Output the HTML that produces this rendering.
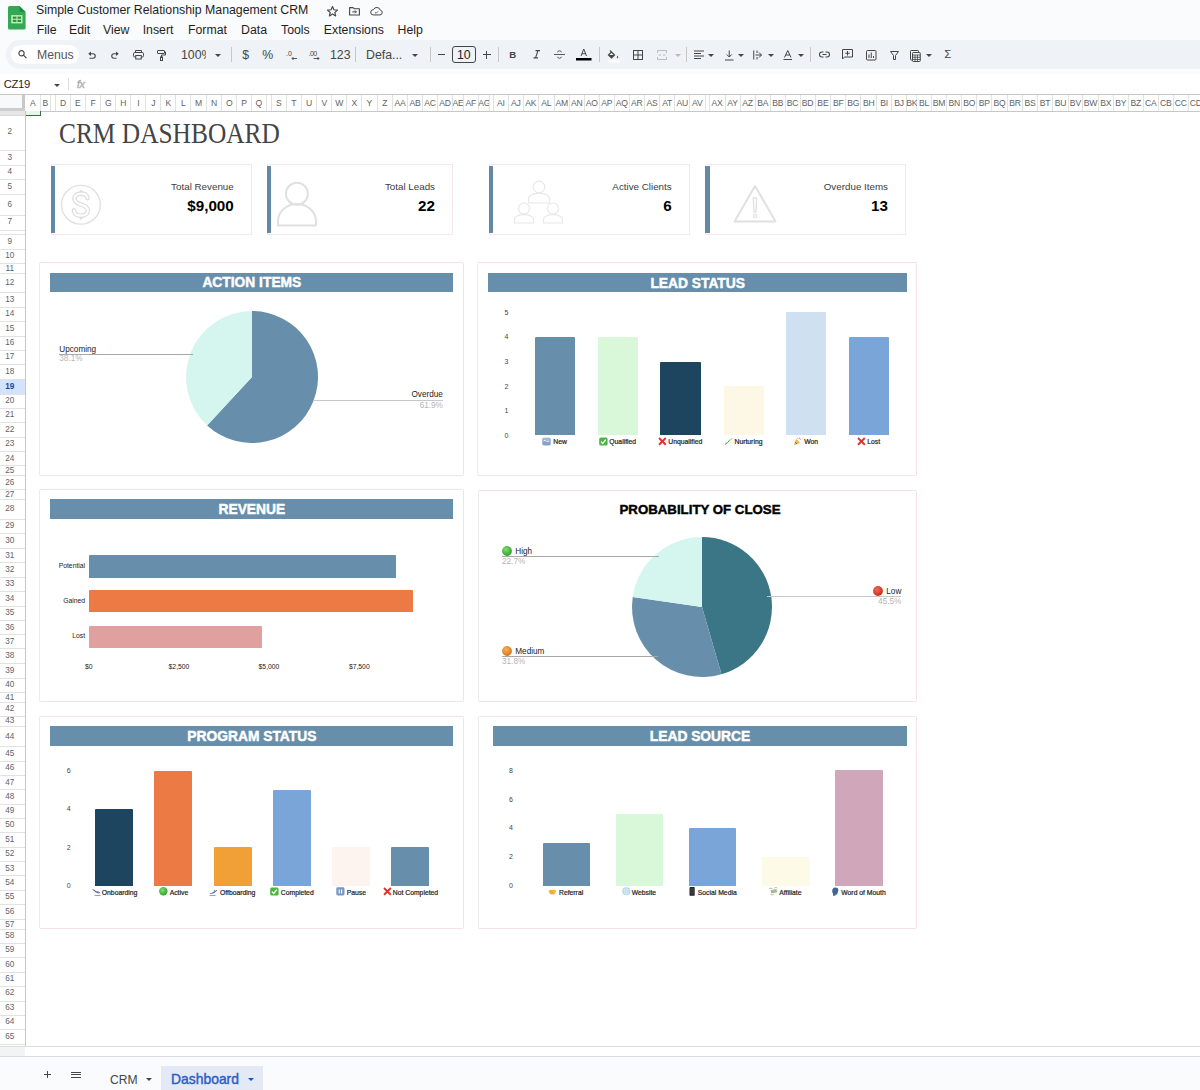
<!DOCTYPE html><html><head><meta charset="utf-8"><style>
html,body{margin:0;padding:0;}
body{width:1200px;height:1090px;overflow:hidden;position:relative;background:#f9fbfd;font-family:"Liberation Sans",sans-serif;}
div{box-sizing:border-box;}
svg{position:absolute;overflow:visible;}
</style></head><body>
<svg style="left:8.4px;top:5.9px" width="17.6" height="23.6" viewBox="0 0 17.6 23.6">
<path d="M1.5 0 H11.4 L17.6 6 V22 Q17.6 23.6 16 23.6 H1.5 Q0 23.6 0 22 V1.5 Q0 0 1.5 0Z" fill="#34a853"/>
<path d="M11.4 0 L17.6 6 H13 Q11.4 6 11.4 4.5Z" fill="#1e8e3e"/>
<rect x="3.2" y="9.1" width="11.3" height="8.3" fill="#b9f2b5"/>
<rect x="4.8" y="10.6" width="3.6" height="2.1" fill="#2e8b3e"/>
<rect x="9.5" y="10.6" width="3.6" height="2.1" fill="#2e8b3e"/>
<rect x="4.8" y="13.8" width="3.6" height="2.1" fill="#2e8b3e"/>
<rect x="9.5" y="13.8" width="3.6" height="2.1" fill="#2e8b3e"/>
</svg>
<div style="position:absolute;top:4.07px;font-size:12.32px;line-height:12.32px;color:#1f1f1f;font-weight:normal;white-space:nowrap;font-family:'Liberation Sans', sans-serif;left:36.00px;">Simple Customer Relationship Management CRM</div>
<svg style="left:327.3px;top:6.3px" width="11" height="10.5" viewBox="1 1.5 22 21"><path d="M12 2.5l2.9 6.6 7.1.6-5.4 4.7 1.6 7-6.2-3.7-6.2 3.7 1.6-7L2 9.7l7.1-.6z" fill="none" stroke="#444746" stroke-width="2.3" stroke-linejoin="round"/></svg>
<svg style="left:349px;top:7.3px" width="11" height="8.6" viewBox="0 0 22 17"><path d="M1.2 1.2h7l2 2.2h10.6v12.4H1.2z" fill="none" stroke="#444746" stroke-width="2.2" stroke-linejoin="round"/><path d="M6.5 9.6h8M12 6.8l2.8 2.8-2.8 2.8" fill="none" stroke="#444746" stroke-width="2"/></svg>
<svg style="left:370px;top:7.3px" width="13" height="8.6" viewBox="0 0 26 17"><path d="M6.5 15.8h13.5a4.8 4.8 0 0 0 .6-9.5A7.2 7.2 0 0 0 7 5.2a5.3 5.3 0 0 0-.5 10.6z" fill="none" stroke="#444746" stroke-width="2"/><path d="M10 10.5l2.2 2 4-4" fill="none" stroke="#444746" stroke-width="1.8"/></svg>
<div style="position:absolute;top:23.89px;font-size:12.3px;line-height:12.3px;color:#1f1f1f;font-weight:normal;white-space:nowrap;font-family:'Liberation Sans', sans-serif;left:36.70px;">File</div>
<div style="position:absolute;top:23.89px;font-size:12.3px;line-height:12.3px;color:#1f1f1f;font-weight:normal;white-space:nowrap;font-family:'Liberation Sans', sans-serif;left:69.00px;">Edit</div>
<div style="position:absolute;top:23.89px;font-size:12.3px;line-height:12.3px;color:#1f1f1f;font-weight:normal;white-space:nowrap;font-family:'Liberation Sans', sans-serif;left:103.00px;">View</div>
<div style="position:absolute;top:23.89px;font-size:12.3px;line-height:12.3px;color:#1f1f1f;font-weight:normal;white-space:nowrap;font-family:'Liberation Sans', sans-serif;left:142.70px;">Insert</div>
<div style="position:absolute;top:23.89px;font-size:12.3px;line-height:12.3px;color:#1f1f1f;font-weight:normal;white-space:nowrap;font-family:'Liberation Sans', sans-serif;left:188.00px;">Format</div>
<div style="position:absolute;top:23.89px;font-size:12.3px;line-height:12.3px;color:#1f1f1f;font-weight:normal;white-space:nowrap;font-family:'Liberation Sans', sans-serif;left:241.00px;">Data</div>
<div style="position:absolute;top:23.89px;font-size:12.3px;line-height:12.3px;color:#1f1f1f;font-weight:normal;white-space:nowrap;font-family:'Liberation Sans', sans-serif;left:281.00px;">Tools</div>
<div style="position:absolute;top:23.89px;font-size:12.3px;line-height:12.3px;color:#1f1f1f;font-weight:normal;white-space:nowrap;font-family:'Liberation Sans', sans-serif;left:323.80px;">Extensions</div>
<div style="position:absolute;top:23.89px;font-size:12.3px;line-height:12.3px;color:#1f1f1f;font-weight:normal;white-space:nowrap;font-family:'Liberation Sans', sans-serif;left:397.50px;">Help</div>
<div style="position:absolute;left:6.00px;top:40.20px;width:1194.00px;height:28.80px;background:#eff2f6;border-radius:14px 0 0 14px;"></div>
<div style="position:absolute;left:10.80px;top:45.20px;width:68.20px;height:18.80px;background:#ffffff;border-radius:10px;"></div>
<svg style="left:18.3px;top:50.2px" width="9.7" height="8.5" viewBox="0 0 20 18"><circle cx="7.2" cy="6.8" r="5.6" fill="none" stroke="#444746" stroke-width="2.4"/><path d="M11.2 10.8l6.5 6.5" stroke="#444746" stroke-width="2.6"/></svg>
<div style="position:absolute;top:48.84px;font-size:12.24px;line-height:12.24px;color:#555;font-weight:normal;white-space:nowrap;font-family:'Liberation Sans', sans-serif;left:37.00px;">Menus</div>
<svg style="left:88.3px;top:51px" width="8" height="8" viewBox="0 0 16 16"><path d="M0.5 5.5L6 1v9z" fill="#444746"/><path d="M5 5.5h5a4.5 4.5 0 0 1 0 9H3" fill="none" stroke="#444746" stroke-width="2.2"/></svg>
<svg style="left:111px;top:51px" width="8" height="8" viewBox="0 0 16 16"><path d="M15.5 5.5L10 1v9z" fill="#444746"/><path d="M11 5.5H6a4.5 4.5 0 0 0 0 9h5" fill="none" stroke="#444746" stroke-width="2.2"/></svg>
<svg style="left:133px;top:50px" width="11" height="9.5" viewBox="0 0 22 19"><path d="M5 5V1h12v4" fill="none" stroke="#444746" stroke-width="2"/><rect x="1" y="5" width="20" height="9" rx="2.5" fill="none" stroke="#444746" stroke-width="2"/><rect x="5.5" y="11" width="11" height="7" fill="#edf2fa" stroke="#444746" stroke-width="2"/></svg>
<svg style="left:157px;top:49.5px" width="9" height="11" viewBox="0 0 18 22"><rect x="1" y="1" width="14" height="6" rx="1" fill="none" stroke="#444746" stroke-width="2"/><path d="M15 4h2v6H9v4" fill="none" stroke="#444746" stroke-width="2"/><rect x="7" y="14" width="4" height="7" fill="none" stroke="#444746" stroke-width="2"/></svg>
<div style="position:absolute;left:181px;top:44px;width:25px;height:20px;overflow:hidden;">
<div style="position:absolute;top:4.99px;font-size:12.3px;line-height:12.3px;color:#444746;font-weight:normal;white-space:nowrap;font-family:'Liberation Sans', sans-serif;left:0.00px;">100%</div>
</div>
<div style="position:absolute;left:214.5px;top:53.7px;width:0;height:0;border-left:3px solid transparent;border-right:3px solid transparent;border-top:3px solid #444746;"></div>
<div style="position:absolute;left:230.50px;top:47.00px;width:1.00px;height:15.00px;background:#c7c7c7;"></div>
<div style="position:absolute;top:48.99px;font-size:12.3px;line-height:12.3px;color:#444746;font-weight:normal;white-space:nowrap;font-family:'Liberation Sans', sans-serif;left:242.30px;">$</div>
<div style="position:absolute;top:48.99px;font-size:12.3px;line-height:12.3px;color:#444746;font-weight:normal;white-space:nowrap;font-family:'Liberation Sans', sans-serif;left:262.30px;">%</div>
<svg style="left:286px;top:49px" width="12" height="12" viewBox="0 0 24 24"><text x="0" y="14" font-family="Liberation Sans" font-size="14" fill="#444746">.0</text><path d="M22 19H12M15 16l-3 3 3 3" fill="none" stroke="#444746" stroke-width="1.8"/></svg>
<svg style="left:309px;top:49px" width="12" height="12" viewBox="0 0 24 24"><text x="-1" y="14" font-family="Liberation Sans" font-size="14" fill="#444746" letter-spacing="-1">.00</text><path d="M9 19h11M17 16l3 3-3 3" fill="none" stroke="#444746" stroke-width="1.8"/></svg>
<div style="position:absolute;top:48.99px;font-size:12.3px;line-height:12.3px;color:#444746;font-weight:normal;white-space:nowrap;font-family:'Liberation Sans', sans-serif;left:330.00px;">123</div>
<div style="position:absolute;left:354.50px;top:47.00px;width:1.00px;height:15.00px;background:#c7c7c7;"></div>
<div style="position:absolute;top:48.99px;font-size:12.3px;line-height:12.3px;color:#444746;font-weight:normal;white-space:nowrap;font-family:'Liberation Sans', sans-serif;left:366.00px;">Defa...</div>
<div style="position:absolute;left:412.0px;top:53.7px;width:0;height:0;border-left:3px solid transparent;border-right:3px solid transparent;border-top:3px solid #444746;"></div>
<div style="position:absolute;left:429.50px;top:47.00px;width:1.00px;height:15.00px;background:#c7c7c7;"></div>
<div style="position:absolute;left:437.50px;top:54.00px;width:7.00px;height:1.20px;background:#444746;"></div>
<div style="position:absolute;left:452px;top:45.5px;width:23.5px;height:17px;border:1.3px solid #444746;border-radius:3px;"></div>
<div style="position:absolute;top:48.89px;font-size:12.3px;line-height:12.3px;color:#1f1f1f;font-weight:normal;white-space:nowrap;font-family:'Liberation Sans', sans-serif;left:163.75px;width:600px;text-align:center;">10</div>
<div style="position:absolute;left:482.50px;top:54.00px;width:8.00px;height:1.20px;background:#444746;"></div>
<div style="position:absolute;left:485.90px;top:50.60px;width:1.20px;height:8.00px;background:#444746;"></div>
<div style="position:absolute;left:497.50px;top:47.00px;width:1.00px;height:15.00px;background:#c7c7c7;"></div>
<div style="position:absolute;top:49.77px;font-size:9.6px;line-height:9.6px;color:#444746;font-weight:bold;white-space:nowrap;font-family:'Liberation Sans', sans-serif;left:509.20px;">B</div>
<svg style="left:532.5px;top:50px" width="7.5" height="8.5" viewBox="0 0 15 17"><path d="M5 1.2h9M1 15.8h9M10 1.2L5 15.8" fill="none" stroke="#444746" stroke-width="2.2"/></svg>
<svg style="left:554px;top:50px" width="11" height="9" viewBox="0 0 22 18"><path d="M0 9h22" stroke="#444746" stroke-width="1.8"/><path d="M15 4.5Q14 1.5 11 1.5T7 4.5M7 13.5q1 3 4 3t4-3" fill="none" stroke="#444746" stroke-width="1.8"/></svg>
<svg style="left:575.5px;top:48.2px" width="15.5" height="13" viewBox="0 0 31 26"><path d="M10 16L15.5 2l5.5 14M12 11.5h7" fill="none" stroke="#444746" stroke-width="2"/><rect x="0" y="20" width="31" height="5" fill="#000"/></svg>
<div style="position:absolute;left:598.50px;top:47.00px;width:1.00px;height:15.00px;background:#c7c7c7;"></div>
<svg style="left:608px;top:48.5px" width="12" height="14" viewBox="0 0 24 28"><path d="M4 3l9 9-6 6-6-6 6-6" fill="none" stroke="#444746" stroke-width="2.4"/><path d="M1 12h12l-6 6z" fill="#444746"/><path d="M19 13q3 4 0 6q-3-2 0-6z" fill="#444746"/><rect x="0" y="23" width="24" height="4" fill="#ffffff"/></svg>
<svg style="left:633px;top:50px" width="10" height="10" viewBox="0 0 20 20"><rect x="1" y="1" width="18" height="18" fill="none" stroke="#444746" stroke-width="2"/><path d="M10 1v18M1 10h18" stroke="#444746" stroke-width="2"/></svg>
<svg style="left:657px;top:50px" width="10" height="10" viewBox="0 0 20 20"><path d="M1 6V1h18v5M1 14v5h18v-5" fill="none" stroke="#b8bcc2" stroke-width="2"/><path d="M3 10h5M12 10h5" stroke="#b8bcc2" stroke-width="2"/></svg>
<div style="position:absolute;left:674.5px;top:53.7px;width:0;height:0;border-left:3px solid transparent;border-right:3px solid transparent;border-top:3px solid #b8bcc2;"></div>
<div style="position:absolute;left:685.50px;top:47.00px;width:1.00px;height:15.00px;background:#c7c7c7;"></div>
<svg style="left:694px;top:50px" width="10" height="10" viewBox="0 0 20 20"><path d="M0 2h20M0 7h14M0 12h20M0 17h14" stroke="#444746" stroke-width="2"/></svg>
<div style="position:absolute;left:708.0px;top:53.7px;width:0;height:0;border-left:3px solid transparent;border-right:3px solid transparent;border-top:3px solid #444746;"></div>
<svg style="left:724.5px;top:49.5px" width="8.5" height="11" viewBox="0 0 17 22"><path d="M8.5 1v13M3.5 9l5 5 5-5M0 20h17" fill="none" stroke="#444746" stroke-width="2"/></svg>
<div style="position:absolute;left:738.0px;top:53.7px;width:0;height:0;border-left:3px solid transparent;border-right:3px solid transparent;border-top:3px solid #444746;"></div>
<svg style="left:753px;top:50px" width="9.5" height="10" viewBox="0 0 19 20"><path d="M1.5 1v18M5 10h12M12 5l5 5-5 5" fill="none" stroke="#444746" stroke-width="2"/><path d="M8 1v5M8 14v5" stroke="#444746" stroke-width="2"/></svg>
<div style="position:absolute;left:767.5px;top:53.7px;width:0;height:0;border-left:3px solid transparent;border-right:3px solid transparent;border-top:3px solid #444746;"></div>
<svg style="left:783px;top:49.5px" width="9.5" height="11" viewBox="0 0 19 22"><path d="M3 15L9.5 1 16 15M5.5 10h8" fill="none" stroke="#444746" stroke-width="2"/><path d="M1 19h17" stroke="#444746" stroke-width="2"/></svg>
<div style="position:absolute;left:797.5px;top:53.7px;width:0;height:0;border-left:3px solid transparent;border-right:3px solid transparent;border-top:3px solid #444746;"></div>
<div style="position:absolute;left:809.50px;top:47.00px;width:1.00px;height:15.00px;background:#c7c7c7;"></div>
<svg style="left:819px;top:51px" width="11" height="7" viewBox="0 0 22 14"><path d="M9 2H6a5 5 0 0 0 0 10h3M13 2h3a5 5 0 0 1 0 10h-3M7 7h8" fill="none" stroke="#444746" stroke-width="2.2"/></svg>
<svg style="left:842px;top:49px" width="11" height="11" viewBox="0 0 22 22"><path d="M1 1h20v15H5l-4 4z" fill="none" stroke="#444746" stroke-width="2"/><path d="M11 4v9M6.5 8.5h9" stroke="#444746" stroke-width="2"/></svg>
<svg style="left:865.5px;top:50px" width="10.5" height="10.5" viewBox="0 0 21 21"><rect x="1" y="1" width="19" height="19" rx="2" fill="none" stroke="#444746" stroke-width="2"/><path d="M6 16V9M10.5 16V5M15 16v-4" stroke="#444746" stroke-width="2"/></svg>
<svg style="left:890px;top:50.5px" width="9" height="9" viewBox="0 0 18 18"><path d="M1 1h16l-6 8v8H7V9z" fill="none" stroke="#444746" stroke-width="2"/></svg>
<svg style="left:910px;top:49.5px" width="12.5" height="12" viewBox="0 0 25 24"><path d="M4 20H2.5A1.5 1.5 0 0 1 1 18.5V2.5A1.5 1.5 0 0 1 2.5 1h13A1.5 1.5 0 0 1 17 2.5V4" fill="none" stroke="#444746" stroke-width="2"/><rect x="5" y="5" width="15.5" height="18" rx="1.5" fill="none" stroke="#444746" stroke-width="2"/><path d="M5 10h15.5M5 14.5h15.5M5 19h15.5M10 10v13M15 10v13" stroke="#444746" stroke-width="1.6"/></svg>
<div style="position:absolute;left:926.0px;top:53.7px;width:0;height:0;border-left:3px solid transparent;border-right:3px solid transparent;border-top:3px solid #444746;"></div>
<div style="position:absolute;top:49.07px;font-size:11.5px;line-height:11.5px;color:#444746;font-weight:normal;white-space:nowrap;font-family:'Liberation Sans', sans-serif;left:944.30px;">&Sigma;</div>
<div style="position:absolute;left:0.00px;top:73.80px;width:1200.00px;height:20.20px;background:#ffffff;"></div>
<div style="position:absolute;top:78.53px;font-size:11.3px;line-height:11.3px;color:#1f1f1f;font-weight:normal;white-space:nowrap;font-family:'Liberation Sans', sans-serif;letter-spacing:-0.35px;left:3.75px;">CZ19</div>
<div style="position:absolute;left:53.5px;top:83.9px;width:0;height:0;border-left:3px solid transparent;border-right:3px solid transparent;border-top:3px solid #444746;"></div>
<div style="position:absolute;left:67.80px;top:78.20px;width:1.00px;height:11.60px;background:#dadce0;"></div>
<div style="position:absolute;top:78.57px;font-size:11.5px;line-height:11.5px;color:#a8abb0;font-weight:normal;white-space:nowrap;font-family:'Liberation Sans', sans-serif;left:76.80px;-webkit-text-stroke:0.3px #a8abb0;letter-spacing:-0.8px;"><i>fx</i></div>
<div style="position:absolute;left:0.00px;top:93.60px;width:1200.00px;height:952.40px;background:#ffffff;"></div>
<div style="position:absolute;left:0.00px;top:93.60px;width:1200.00px;height:1.00px;background:#c7c7c7;"></div>
<div style="position:absolute;left:0.00px;top:110.80px;width:1200.00px;height:1.00px;background:#c7c7c7;"></div>
<div style="position:absolute;left:39.90px;top:94.60px;width:1.00px;height:16.40px;background:#e1e3e1;"></div>
<div style="position:absolute;left:25.00px;top:97px;width:15.40px;height:12px;overflow:hidden;text-align:center;font-size:8.6px;line-height:12px;color:#5f6368;letter-spacing:-0.2px;">A</div>
<div style="position:absolute;left:49.50px;top:94.60px;width:1.00px;height:16.40px;background:#e1e3e1;"></div>
<div style="position:absolute;left:40.40px;top:97px;width:9.60px;height:12px;overflow:hidden;text-align:center;font-size:8.6px;line-height:12px;color:#5f6368;letter-spacing:-0.2px;">B</div>
<div style="position:absolute;left:54.90px;top:94.60px;width:1.00px;height:16.40px;background:#e1e3e1;"></div>
<div style="position:absolute;left:69.90px;top:94.60px;width:1.00px;height:16.40px;background:#e1e3e1;"></div>
<div style="position:absolute;left:55.40px;top:97px;width:15.00px;height:12px;overflow:hidden;text-align:center;font-size:8.6px;line-height:12px;color:#5f6368;letter-spacing:-0.2px;">D</div>
<div style="position:absolute;left:84.90px;top:94.60px;width:1.00px;height:16.40px;background:#e1e3e1;"></div>
<div style="position:absolute;left:70.40px;top:97px;width:15.00px;height:12px;overflow:hidden;text-align:center;font-size:8.6px;line-height:12px;color:#5f6368;letter-spacing:-0.2px;">E</div>
<div style="position:absolute;left:100.30px;top:94.60px;width:1.00px;height:16.40px;background:#e1e3e1;"></div>
<div style="position:absolute;left:85.40px;top:97px;width:15.40px;height:12px;overflow:hidden;text-align:center;font-size:8.6px;line-height:12px;color:#5f6368;letter-spacing:-0.2px;">F</div>
<div style="position:absolute;left:115.30px;top:94.60px;width:1.00px;height:16.40px;background:#e1e3e1;"></div>
<div style="position:absolute;left:100.80px;top:97px;width:15.00px;height:12px;overflow:hidden;text-align:center;font-size:8.6px;line-height:12px;color:#5f6368;letter-spacing:-0.2px;">G</div>
<div style="position:absolute;left:130.30px;top:94.60px;width:1.00px;height:16.40px;background:#e1e3e1;"></div>
<div style="position:absolute;left:115.80px;top:97px;width:15.00px;height:12px;overflow:hidden;text-align:center;font-size:8.6px;line-height:12px;color:#5f6368;letter-spacing:-0.2px;">H</div>
<div style="position:absolute;left:145.30px;top:94.60px;width:1.00px;height:16.40px;background:#e1e3e1;"></div>
<div style="position:absolute;left:130.80px;top:97px;width:15.00px;height:12px;overflow:hidden;text-align:center;font-size:8.6px;line-height:12px;color:#5f6368;letter-spacing:-0.2px;">I</div>
<div style="position:absolute;left:160.30px;top:94.60px;width:1.00px;height:16.40px;background:#e1e3e1;"></div>
<div style="position:absolute;left:145.80px;top:97px;width:15.00px;height:12px;overflow:hidden;text-align:center;font-size:8.6px;line-height:12px;color:#5f6368;letter-spacing:-0.2px;">J</div>
<div style="position:absolute;left:175.30px;top:94.60px;width:1.00px;height:16.40px;background:#e1e3e1;"></div>
<div style="position:absolute;left:160.80px;top:97px;width:15.00px;height:12px;overflow:hidden;text-align:center;font-size:8.6px;line-height:12px;color:#5f6368;letter-spacing:-0.2px;">K</div>
<div style="position:absolute;left:190.30px;top:94.60px;width:1.00px;height:16.40px;background:#e1e3e1;"></div>
<div style="position:absolute;left:175.80px;top:97px;width:15.00px;height:12px;overflow:hidden;text-align:center;font-size:8.6px;line-height:12px;color:#5f6368;letter-spacing:-0.2px;">L</div>
<div style="position:absolute;left:205.80px;top:94.60px;width:1.00px;height:16.40px;background:#e1e3e1;"></div>
<div style="position:absolute;left:190.80px;top:97px;width:15.50px;height:12px;overflow:hidden;text-align:center;font-size:8.6px;line-height:12px;color:#5f6368;letter-spacing:-0.2px;">M</div>
<div style="position:absolute;left:221.20px;top:94.60px;width:1.00px;height:16.40px;background:#e1e3e1;"></div>
<div style="position:absolute;left:206.30px;top:97px;width:15.40px;height:12px;overflow:hidden;text-align:center;font-size:8.6px;line-height:12px;color:#5f6368;letter-spacing:-0.2px;">N</div>
<div style="position:absolute;left:236.20px;top:94.60px;width:1.00px;height:16.40px;background:#e1e3e1;"></div>
<div style="position:absolute;left:221.70px;top:97px;width:15.00px;height:12px;overflow:hidden;text-align:center;font-size:8.6px;line-height:12px;color:#5f6368;letter-spacing:-0.2px;">O</div>
<div style="position:absolute;left:250.80px;top:94.60px;width:1.00px;height:16.40px;background:#e1e3e1;"></div>
<div style="position:absolute;left:236.70px;top:97px;width:14.60px;height:12px;overflow:hidden;text-align:center;font-size:8.6px;line-height:12px;color:#5f6368;letter-spacing:-0.2px;">P</div>
<div style="position:absolute;left:265.80px;top:94.60px;width:1.00px;height:16.40px;background:#e1e3e1;"></div>
<div style="position:absolute;left:251.30px;top:97px;width:15.00px;height:12px;overflow:hidden;text-align:center;font-size:8.6px;line-height:12px;color:#5f6368;letter-spacing:-0.2px;">Q</div>
<div style="position:absolute;left:270.80px;top:94.60px;width:1.00px;height:16.40px;background:#e1e3e1;"></div>
<div style="position:absolute;left:285.80px;top:94.60px;width:1.00px;height:16.40px;background:#e1e3e1;"></div>
<div style="position:absolute;left:271.30px;top:97px;width:15.00px;height:12px;overflow:hidden;text-align:center;font-size:8.6px;line-height:12px;color:#5f6368;letter-spacing:-0.2px;">S</div>
<div style="position:absolute;left:300.80px;top:94.60px;width:1.00px;height:16.40px;background:#e1e3e1;"></div>
<div style="position:absolute;left:286.30px;top:97px;width:15.00px;height:12px;overflow:hidden;text-align:center;font-size:8.6px;line-height:12px;color:#5f6368;letter-spacing:-0.2px;">T</div>
<div style="position:absolute;left:316.20px;top:94.60px;width:1.00px;height:16.40px;background:#e1e3e1;"></div>
<div style="position:absolute;left:301.30px;top:97px;width:15.40px;height:12px;overflow:hidden;text-align:center;font-size:8.6px;line-height:12px;color:#5f6368;letter-spacing:-0.2px;">U</div>
<div style="position:absolute;left:331.20px;top:94.60px;width:1.00px;height:16.40px;background:#e1e3e1;"></div>
<div style="position:absolute;left:316.70px;top:97px;width:15.00px;height:12px;overflow:hidden;text-align:center;font-size:8.6px;line-height:12px;color:#5f6368;letter-spacing:-0.2px;">V</div>
<div style="position:absolute;left:346.20px;top:94.60px;width:1.00px;height:16.40px;background:#e1e3e1;"></div>
<div style="position:absolute;left:331.70px;top:97px;width:15.00px;height:12px;overflow:hidden;text-align:center;font-size:8.6px;line-height:12px;color:#5f6368;letter-spacing:-0.2px;">W</div>
<div style="position:absolute;left:361.20px;top:94.60px;width:1.00px;height:16.40px;background:#e1e3e1;"></div>
<div style="position:absolute;left:346.70px;top:97px;width:15.00px;height:12px;overflow:hidden;text-align:center;font-size:8.6px;line-height:12px;color:#5f6368;letter-spacing:-0.2px;">X</div>
<div style="position:absolute;left:376.50px;top:94.60px;width:1.00px;height:16.40px;background:#e1e3e1;"></div>
<div style="position:absolute;left:361.70px;top:97px;width:15.30px;height:12px;overflow:hidden;text-align:center;font-size:8.6px;line-height:12px;color:#5f6368;letter-spacing:-0.2px;">Y</div>
<div style="position:absolute;left:392.00px;top:94.60px;width:1.00px;height:16.40px;background:#e1e3e1;"></div>
<div style="position:absolute;left:377.00px;top:97px;width:15.50px;height:12px;overflow:hidden;text-align:center;font-size:8.6px;line-height:12px;color:#5f6368;letter-spacing:-0.2px;">Z</div>
<div style="position:absolute;left:407.00px;top:94.60px;width:1.00px;height:16.40px;background:#e1e3e1;"></div>
<div style="position:absolute;left:392.50px;top:97px;width:15.00px;height:12px;overflow:hidden;text-align:center;font-size:8.6px;line-height:12px;color:#5f6368;letter-spacing:-0.2px;">AA</div>
<div style="position:absolute;left:422.00px;top:94.60px;width:1.00px;height:16.40px;background:#e1e3e1;"></div>
<div style="position:absolute;left:407.50px;top:97px;width:15.00px;height:12px;overflow:hidden;text-align:center;font-size:8.6px;line-height:12px;color:#5f6368;letter-spacing:-0.2px;">AB</div>
<div style="position:absolute;left:437.00px;top:94.60px;width:1.00px;height:16.40px;background:#e1e3e1;"></div>
<div style="position:absolute;left:422.50px;top:97px;width:15.00px;height:12px;overflow:hidden;text-align:center;font-size:8.6px;line-height:12px;color:#5f6368;letter-spacing:-0.2px;">AC</div>
<div style="position:absolute;left:452.00px;top:94.60px;width:1.00px;height:16.40px;background:#e1e3e1;"></div>
<div style="position:absolute;left:437.50px;top:97px;width:15.00px;height:12px;overflow:hidden;text-align:center;font-size:8.6px;line-height:12px;color:#5f6368;letter-spacing:-0.2px;">AD</div>
<div style="position:absolute;left:462.80px;top:94.60px;width:1.00px;height:16.40px;background:#e1e3e1;"></div>
<div style="position:absolute;left:452.50px;top:97px;width:10.80px;height:12px;overflow:hidden;text-align:center;font-size:8.6px;line-height:12px;color:#5f6368;letter-spacing:-0.2px;">AE</div>
<div style="position:absolute;left:477.80px;top:94.60px;width:1.00px;height:16.40px;background:#e1e3e1;"></div>
<div style="position:absolute;left:463.30px;top:97px;width:15.00px;height:12px;overflow:hidden;text-align:center;font-size:8.6px;line-height:12px;color:#5f6368;letter-spacing:-0.2px;">AF</div>
<div style="position:absolute;left:488.50px;top:94.60px;width:1.00px;height:16.40px;background:#e1e3e1;"></div>
<div style="position:absolute;left:478.30px;top:97px;width:10.70px;height:12px;overflow:hidden;text-align:center;font-size:8.6px;line-height:12px;color:#5f6368;letter-spacing:-0.2px;">AG</div>
<div style="position:absolute;left:492.80px;top:94.60px;width:1.00px;height:16.40px;background:#e1e3e1;"></div>
<div style="position:absolute;left:507.80px;top:94.60px;width:1.00px;height:16.40px;background:#e1e3e1;"></div>
<div style="position:absolute;left:493.30px;top:97px;width:15.00px;height:12px;overflow:hidden;text-align:center;font-size:8.6px;line-height:12px;color:#5f6368;letter-spacing:-0.2px;">AI</div>
<div style="position:absolute;left:522.80px;top:94.60px;width:1.00px;height:16.40px;background:#e1e3e1;"></div>
<div style="position:absolute;left:508.30px;top:97px;width:15.00px;height:12px;overflow:hidden;text-align:center;font-size:8.6px;line-height:12px;color:#5f6368;letter-spacing:-0.2px;">AJ</div>
<div style="position:absolute;left:537.80px;top:94.60px;width:1.00px;height:16.40px;background:#e1e3e1;"></div>
<div style="position:absolute;left:523.30px;top:97px;width:15.00px;height:12px;overflow:hidden;text-align:center;font-size:8.6px;line-height:12px;color:#5f6368;letter-spacing:-0.2px;">AK</div>
<div style="position:absolute;left:553.70px;top:94.60px;width:1.00px;height:16.40px;background:#e1e3e1;"></div>
<div style="position:absolute;left:538.30px;top:97px;width:15.90px;height:12px;overflow:hidden;text-align:center;font-size:8.6px;line-height:12px;color:#5f6368;letter-spacing:-0.2px;">AL</div>
<div style="position:absolute;left:568.70px;top:94.60px;width:1.00px;height:16.40px;background:#e1e3e1;"></div>
<div style="position:absolute;left:554.20px;top:97px;width:15.00px;height:12px;overflow:hidden;text-align:center;font-size:8.6px;line-height:12px;color:#5f6368;letter-spacing:-0.2px;">AM</div>
<div style="position:absolute;left:583.70px;top:94.60px;width:1.00px;height:16.40px;background:#e1e3e1;"></div>
<div style="position:absolute;left:569.20px;top:97px;width:15.00px;height:12px;overflow:hidden;text-align:center;font-size:8.6px;line-height:12px;color:#5f6368;letter-spacing:-0.2px;">AN</div>
<div style="position:absolute;left:598.70px;top:94.60px;width:1.00px;height:16.40px;background:#e1e3e1;"></div>
<div style="position:absolute;left:584.20px;top:97px;width:15.00px;height:12px;overflow:hidden;text-align:center;font-size:8.6px;line-height:12px;color:#5f6368;letter-spacing:-0.2px;">AO</div>
<div style="position:absolute;left:613.70px;top:94.60px;width:1.00px;height:16.40px;background:#e1e3e1;"></div>
<div style="position:absolute;left:599.20px;top:97px;width:15.00px;height:12px;overflow:hidden;text-align:center;font-size:8.6px;line-height:12px;color:#5f6368;letter-spacing:-0.2px;">AP</div>
<div style="position:absolute;left:628.70px;top:94.60px;width:1.00px;height:16.40px;background:#e1e3e1;"></div>
<div style="position:absolute;left:614.20px;top:97px;width:15.00px;height:12px;overflow:hidden;text-align:center;font-size:8.6px;line-height:12px;color:#5f6368;letter-spacing:-0.2px;">AQ</div>
<div style="position:absolute;left:643.70px;top:94.60px;width:1.00px;height:16.40px;background:#e1e3e1;"></div>
<div style="position:absolute;left:629.20px;top:97px;width:15.00px;height:12px;overflow:hidden;text-align:center;font-size:8.6px;line-height:12px;color:#5f6368;letter-spacing:-0.2px;">AR</div>
<div style="position:absolute;left:659.20px;top:94.60px;width:1.00px;height:16.40px;background:#e1e3e1;"></div>
<div style="position:absolute;left:644.20px;top:97px;width:15.50px;height:12px;overflow:hidden;text-align:center;font-size:8.6px;line-height:12px;color:#5f6368;letter-spacing:-0.2px;">AS</div>
<div style="position:absolute;left:674.20px;top:94.60px;width:1.00px;height:16.40px;background:#e1e3e1;"></div>
<div style="position:absolute;left:659.70px;top:97px;width:15.00px;height:12px;overflow:hidden;text-align:center;font-size:8.6px;line-height:12px;color:#5f6368;letter-spacing:-0.2px;">AT</div>
<div style="position:absolute;left:689.20px;top:94.60px;width:1.00px;height:16.40px;background:#e1e3e1;"></div>
<div style="position:absolute;left:674.70px;top:97px;width:15.00px;height:12px;overflow:hidden;text-align:center;font-size:8.6px;line-height:12px;color:#5f6368;letter-spacing:-0.2px;">AU</div>
<div style="position:absolute;left:704.50px;top:94.60px;width:1.00px;height:16.40px;background:#e1e3e1;"></div>
<div style="position:absolute;left:689.70px;top:97px;width:15.30px;height:12px;overflow:hidden;text-align:center;font-size:8.6px;line-height:12px;color:#5f6368;letter-spacing:-0.2px;">AV</div>
<div style="position:absolute;left:708.70px;top:94.60px;width:1.00px;height:16.40px;background:#e1e3e1;"></div>
<div style="position:absolute;left:724.50px;top:94.60px;width:1.00px;height:16.40px;background:#e1e3e1;"></div>
<div style="position:absolute;left:709.20px;top:97px;width:15.80px;height:12px;overflow:hidden;text-align:center;font-size:8.6px;line-height:12px;color:#5f6368;letter-spacing:-0.2px;">AX</div>
<div style="position:absolute;left:739.50px;top:94.60px;width:1.00px;height:16.40px;background:#e1e3e1;"></div>
<div style="position:absolute;left:725.00px;top:97px;width:15.00px;height:12px;overflow:hidden;text-align:center;font-size:8.6px;line-height:12px;color:#5f6368;letter-spacing:-0.2px;">AY</div>
<div style="position:absolute;left:754.50px;top:94.60px;width:1.00px;height:16.40px;background:#e1e3e1;"></div>
<div style="position:absolute;left:740.00px;top:97px;width:15.00px;height:12px;overflow:hidden;text-align:center;font-size:8.6px;line-height:12px;color:#5f6368;letter-spacing:-0.2px;">AZ</div>
<div style="position:absolute;left:770.00px;top:94.60px;width:1.00px;height:16.40px;background:#e1e3e1;"></div>
<div style="position:absolute;left:755.00px;top:97px;width:15.50px;height:12px;overflow:hidden;text-align:center;font-size:8.6px;line-height:12px;color:#5f6368;letter-spacing:-0.2px;">BA</div>
<div style="position:absolute;left:784.50px;top:94.60px;width:1.00px;height:16.40px;background:#e1e3e1;"></div>
<div style="position:absolute;left:770.50px;top:97px;width:14.50px;height:12px;overflow:hidden;text-align:center;font-size:8.6px;line-height:12px;color:#5f6368;letter-spacing:-0.2px;">BB</div>
<div style="position:absolute;left:799.50px;top:94.60px;width:1.00px;height:16.40px;background:#e1e3e1;"></div>
<div style="position:absolute;left:785.00px;top:97px;width:15.00px;height:12px;overflow:hidden;text-align:center;font-size:8.6px;line-height:12px;color:#5f6368;letter-spacing:-0.2px;">BC</div>
<div style="position:absolute;left:814.50px;top:94.60px;width:1.00px;height:16.40px;background:#e1e3e1;"></div>
<div style="position:absolute;left:800.00px;top:97px;width:15.00px;height:12px;overflow:hidden;text-align:center;font-size:8.6px;line-height:12px;color:#5f6368;letter-spacing:-0.2px;">BD</div>
<div style="position:absolute;left:830.30px;top:94.60px;width:1.00px;height:16.40px;background:#e1e3e1;"></div>
<div style="position:absolute;left:815.00px;top:97px;width:15.80px;height:12px;overflow:hidden;text-align:center;font-size:8.6px;line-height:12px;color:#5f6368;letter-spacing:-0.2px;">BE</div>
<div style="position:absolute;left:845.30px;top:94.60px;width:1.00px;height:16.40px;background:#e1e3e1;"></div>
<div style="position:absolute;left:830.80px;top:97px;width:15.00px;height:12px;overflow:hidden;text-align:center;font-size:8.6px;line-height:12px;color:#5f6368;letter-spacing:-0.2px;">BF</div>
<div style="position:absolute;left:860.30px;top:94.60px;width:1.00px;height:16.40px;background:#e1e3e1;"></div>
<div style="position:absolute;left:845.80px;top:97px;width:15.00px;height:12px;overflow:hidden;text-align:center;font-size:8.6px;line-height:12px;color:#5f6368;letter-spacing:-0.2px;">BG</div>
<div style="position:absolute;left:876.20px;top:94.60px;width:1.00px;height:16.40px;background:#e1e3e1;"></div>
<div style="position:absolute;left:860.80px;top:97px;width:15.90px;height:12px;overflow:hidden;text-align:center;font-size:8.6px;line-height:12px;color:#5f6368;letter-spacing:-0.2px;">BH</div>
<div style="position:absolute;left:891.20px;top:94.60px;width:1.00px;height:16.40px;background:#e1e3e1;"></div>
<div style="position:absolute;left:876.70px;top:97px;width:15.00px;height:12px;overflow:hidden;text-align:center;font-size:8.6px;line-height:12px;color:#5f6368;letter-spacing:-0.2px;">BI</div>
<div style="position:absolute;left:905.80px;top:94.60px;width:1.00px;height:16.40px;background:#e1e3e1;"></div>
<div style="position:absolute;left:891.70px;top:97px;width:14.60px;height:12px;overflow:hidden;text-align:center;font-size:8.6px;line-height:12px;color:#5f6368;letter-spacing:-0.2px;">BJ</div>
<div style="position:absolute;left:916.20px;top:94.60px;width:1.00px;height:16.40px;background:#e1e3e1;"></div>
<div style="position:absolute;left:906.30px;top:97px;width:10.40px;height:12px;overflow:hidden;text-align:center;font-size:8.6px;line-height:12px;color:#5f6368;letter-spacing:-0.2px;">BK</div>
<div style="position:absolute;left:930.80px;top:94.60px;width:1.00px;height:16.40px;background:#e1e3e1;"></div>
<div style="position:absolute;left:916.70px;top:97px;width:14.60px;height:12px;overflow:hidden;text-align:center;font-size:8.6px;line-height:12px;color:#5f6368;letter-spacing:-0.2px;">BL</div>
<div style="position:absolute;left:946.20px;top:94.60px;width:1.00px;height:16.40px;background:#e1e3e1;"></div>
<div style="position:absolute;left:931.30px;top:97px;width:15.40px;height:12px;overflow:hidden;text-align:center;font-size:8.6px;line-height:12px;color:#5f6368;letter-spacing:-0.2px;">BM</div>
<div style="position:absolute;left:961.20px;top:94.60px;width:1.00px;height:16.40px;background:#e1e3e1;"></div>
<div style="position:absolute;left:946.70px;top:97px;width:15.00px;height:12px;overflow:hidden;text-align:center;font-size:8.6px;line-height:12px;color:#5f6368;letter-spacing:-0.2px;">BN</div>
<div style="position:absolute;left:976.20px;top:94.60px;width:1.00px;height:16.40px;background:#e1e3e1;"></div>
<div style="position:absolute;left:961.70px;top:97px;width:15.00px;height:12px;overflow:hidden;text-align:center;font-size:8.6px;line-height:12px;color:#5f6368;letter-spacing:-0.2px;">BO</div>
<div style="position:absolute;left:991.20px;top:94.60px;width:1.00px;height:16.40px;background:#e1e3e1;"></div>
<div style="position:absolute;left:976.70px;top:97px;width:15.00px;height:12px;overflow:hidden;text-align:center;font-size:8.6px;line-height:12px;color:#5f6368;letter-spacing:-0.2px;">BP</div>
<div style="position:absolute;left:1007.00px;top:94.60px;width:1.00px;height:16.40px;background:#e1e3e1;"></div>
<div style="position:absolute;left:991.70px;top:97px;width:15.80px;height:12px;overflow:hidden;text-align:center;font-size:8.6px;line-height:12px;color:#5f6368;letter-spacing:-0.2px;">BQ</div>
<div style="position:absolute;left:1022.00px;top:94.60px;width:1.00px;height:16.40px;background:#e1e3e1;"></div>
<div style="position:absolute;left:1007.50px;top:97px;width:15.00px;height:12px;overflow:hidden;text-align:center;font-size:8.6px;line-height:12px;color:#5f6368;letter-spacing:-0.2px;">BR</div>
<div style="position:absolute;left:1037.00px;top:94.60px;width:1.00px;height:16.40px;background:#e1e3e1;"></div>
<div style="position:absolute;left:1022.50px;top:97px;width:15.00px;height:12px;overflow:hidden;text-align:center;font-size:8.6px;line-height:12px;color:#5f6368;letter-spacing:-0.2px;">BS</div>
<div style="position:absolute;left:1052.00px;top:94.60px;width:1.00px;height:16.40px;background:#e1e3e1;"></div>
<div style="position:absolute;left:1037.50px;top:97px;width:15.00px;height:12px;overflow:hidden;text-align:center;font-size:8.6px;line-height:12px;color:#5f6368;letter-spacing:-0.2px;">BT</div>
<div style="position:absolute;left:1067.80px;top:94.60px;width:1.00px;height:16.40px;background:#e1e3e1;"></div>
<div style="position:absolute;left:1052.50px;top:97px;width:15.80px;height:12px;overflow:hidden;text-align:center;font-size:8.6px;line-height:12px;color:#5f6368;letter-spacing:-0.2px;">BU</div>
<div style="position:absolute;left:1082.00px;top:94.60px;width:1.00px;height:16.40px;background:#e1e3e1;"></div>
<div style="position:absolute;left:1068.30px;top:97px;width:14.20px;height:12px;overflow:hidden;text-align:center;font-size:8.6px;line-height:12px;color:#5f6368;letter-spacing:-0.2px;">BV</div>
<div style="position:absolute;left:1097.80px;top:94.60px;width:1.00px;height:16.40px;background:#e1e3e1;"></div>
<div style="position:absolute;left:1082.50px;top:97px;width:15.80px;height:12px;overflow:hidden;text-align:center;font-size:8.6px;line-height:12px;color:#5f6368;letter-spacing:-0.2px;">BW</div>
<div style="position:absolute;left:1112.80px;top:94.60px;width:1.00px;height:16.40px;background:#e1e3e1;"></div>
<div style="position:absolute;left:1098.30px;top:97px;width:15.00px;height:12px;overflow:hidden;text-align:center;font-size:8.6px;line-height:12px;color:#5f6368;letter-spacing:-0.2px;">BX</div>
<div style="position:absolute;left:1127.80px;top:94.60px;width:1.00px;height:16.40px;background:#e1e3e1;"></div>
<div style="position:absolute;left:1113.30px;top:97px;width:15.00px;height:12px;overflow:hidden;text-align:center;font-size:8.6px;line-height:12px;color:#5f6368;letter-spacing:-0.2px;">BY</div>
<div style="position:absolute;left:1142.80px;top:94.60px;width:1.00px;height:16.40px;background:#e1e3e1;"></div>
<div style="position:absolute;left:1128.30px;top:97px;width:15.00px;height:12px;overflow:hidden;text-align:center;font-size:8.6px;line-height:12px;color:#5f6368;letter-spacing:-0.2px;">BZ</div>
<div style="position:absolute;left:1157.80px;top:94.60px;width:1.00px;height:16.40px;background:#e1e3e1;"></div>
<div style="position:absolute;left:1143.30px;top:97px;width:15.00px;height:12px;overflow:hidden;text-align:center;font-size:8.6px;line-height:12px;color:#5f6368;letter-spacing:-0.2px;">CA</div>
<div style="position:absolute;left:1172.80px;top:94.60px;width:1.00px;height:16.40px;background:#e1e3e1;"></div>
<div style="position:absolute;left:1158.30px;top:97px;width:15.00px;height:12px;overflow:hidden;text-align:center;font-size:8.6px;line-height:12px;color:#5f6368;letter-spacing:-0.2px;">CB</div>
<div style="position:absolute;left:1187.80px;top:94.60px;width:1.00px;height:16.40px;background:#e1e3e1;"></div>
<div style="position:absolute;left:1173.30px;top:97px;width:15.00px;height:12px;overflow:hidden;text-align:center;font-size:8.6px;line-height:12px;color:#5f6368;letter-spacing:-0.2px;">CC</div>
<div style="position:absolute;left:1202.80px;top:94.60px;width:1.00px;height:16.40px;background:#e1e3e1;"></div>
<div style="position:absolute;left:1188.30px;top:97px;width:15.00px;height:12px;overflow:hidden;text-align:center;font-size:8.6px;line-height:12px;color:#5f6368;letter-spacing:-0.2px;">CD</div>
<div style="position:absolute;left:0.00px;top:94.60px;width:22.50px;height:13.70px;background:#f8f9fa;"></div>
<div style="position:absolute;left:22.30px;top:94.60px;width:2.70px;height:16.60px;background:#c8c8c8;"></div>
<div style="position:absolute;left:0.00px;top:108.30px;width:25.00px;height:2.90px;background:#cdcdcd;"></div>
<div style="position:absolute;left:0.00px;top:111.20px;width:25.00px;height:4.20px;background:#e6e6e6;"></div>
<div style="position:absolute;left:25px;top:111.3px;width:15.6px;height:4.5px;border:1.3px solid #3d6b45;border-top:none;background:#e6f6e8;"></div>
<div style="position:absolute;left:0.00px;top:115.00px;width:24.80px;height:0.80px;background:#dadada;"></div>
<div style="position:absolute;left:0.00px;top:149.70px;width:24.80px;height:1.00px;background:#e1e3e1;"></div>
<div style="position:absolute;left:0;top:115.40px;width:19.5px;height:34.80px;text-align:center;font-size:8.2px;line-height:34.80px;color:#5f6368;font-weight:normal;">2</div>
<div style="position:absolute;left:0.00px;top:164.70px;width:24.80px;height:1.00px;background:#e1e3e1;"></div>
<div style="position:absolute;left:0;top:150.20px;width:19.5px;height:15.00px;text-align:center;font-size:8.2px;line-height:15.00px;color:#5f6368;font-weight:normal;">3</div>
<div style="position:absolute;left:0.00px;top:178.70px;width:24.80px;height:1.00px;background:#e1e3e1;"></div>
<div style="position:absolute;left:0;top:165.20px;width:19.5px;height:14.00px;text-align:center;font-size:8.2px;line-height:14.00px;color:#5f6368;font-weight:normal;">4</div>
<div style="position:absolute;left:0.00px;top:193.70px;width:24.80px;height:1.00px;background:#e1e3e1;"></div>
<div style="position:absolute;left:0;top:179.20px;width:19.5px;height:15.00px;text-align:center;font-size:8.2px;line-height:15.00px;color:#5f6368;font-weight:normal;">5</div>
<div style="position:absolute;left:0.00px;top:214.80px;width:24.80px;height:1.00px;background:#e1e3e1;"></div>
<div style="position:absolute;left:0;top:194.20px;width:19.5px;height:21.10px;text-align:center;font-size:8.2px;line-height:21.10px;color:#5f6368;font-weight:normal;">6</div>
<div style="position:absolute;left:0.00px;top:229.50px;width:24.80px;height:1.00px;background:#e1e3e1;"></div>
<div style="position:absolute;left:0;top:215.30px;width:19.5px;height:14.70px;text-align:center;font-size:8.2px;line-height:14.70px;color:#5f6368;font-weight:normal;">7</div>
<div style="position:absolute;left:0.00px;top:234.10px;width:24.80px;height:1.00px;background:#e1e3e1;"></div>
<div style="position:absolute;left:0.00px;top:248.80px;width:24.80px;height:1.00px;background:#e1e3e1;"></div>
<div style="position:absolute;left:0;top:234.60px;width:19.5px;height:14.70px;text-align:center;font-size:8.2px;line-height:14.70px;color:#5f6368;font-weight:normal;">9</div>
<div style="position:absolute;left:0.00px;top:263.10px;width:24.80px;height:1.00px;background:#e1e3e1;"></div>
<div style="position:absolute;left:0;top:249.30px;width:19.5px;height:14.30px;text-align:center;font-size:8.2px;line-height:14.30px;color:#5f6368;font-weight:normal;">10</div>
<div style="position:absolute;left:0.00px;top:272.60px;width:24.80px;height:1.00px;background:#e1e3e1;"></div>
<div style="position:absolute;left:0;top:263.60px;width:19.5px;height:9.50px;text-align:center;font-size:8.2px;line-height:9.50px;color:#5f6368;font-weight:normal;">11</div>
<div style="position:absolute;left:0.00px;top:291.80px;width:24.80px;height:1.00px;background:#e1e3e1;"></div>
<div style="position:absolute;left:0;top:273.10px;width:19.5px;height:19.20px;text-align:center;font-size:8.2px;line-height:19.20px;color:#5f6368;font-weight:normal;">12</div>
<div style="position:absolute;left:0.00px;top:306.90px;width:24.80px;height:1.00px;background:#e1e3e1;"></div>
<div style="position:absolute;left:0;top:292.30px;width:19.5px;height:15.10px;text-align:center;font-size:8.2px;line-height:15.10px;color:#5f6368;font-weight:normal;">13</div>
<div style="position:absolute;left:0.00px;top:321.10px;width:24.80px;height:1.00px;background:#e1e3e1;"></div>
<div style="position:absolute;left:0;top:307.40px;width:19.5px;height:14.20px;text-align:center;font-size:8.2px;line-height:14.20px;color:#5f6368;font-weight:normal;">14</div>
<div style="position:absolute;left:0.00px;top:335.70px;width:24.80px;height:1.00px;background:#e1e3e1;"></div>
<div style="position:absolute;left:0;top:321.60px;width:19.5px;height:14.60px;text-align:center;font-size:8.2px;line-height:14.60px;color:#5f6368;font-weight:normal;">15</div>
<div style="position:absolute;left:0.00px;top:349.70px;width:24.80px;height:1.00px;background:#e1e3e1;"></div>
<div style="position:absolute;left:0;top:336.20px;width:19.5px;height:14.00px;text-align:center;font-size:8.2px;line-height:14.00px;color:#5f6368;font-weight:normal;">16</div>
<div style="position:absolute;left:0.00px;top:364.40px;width:24.80px;height:1.00px;background:#e1e3e1;"></div>
<div style="position:absolute;left:0;top:350.20px;width:19.5px;height:14.70px;text-align:center;font-size:8.2px;line-height:14.70px;color:#5f6368;font-weight:normal;">17</div>
<div style="position:absolute;left:0.00px;top:379.00px;width:24.80px;height:1.00px;background:#e1e3e1;"></div>
<div style="position:absolute;left:0;top:364.90px;width:19.5px;height:14.60px;text-align:center;font-size:8.2px;line-height:14.60px;color:#5f6368;font-weight:normal;">18</div>
<div style="position:absolute;left:0.00px;top:379.50px;width:24.80px;height:14.70px;background:#d3e3fd;"></div>
<div style="position:absolute;left:0.00px;top:393.70px;width:24.80px;height:1.00px;background:#e1e3e1;"></div>
<div style="position:absolute;left:0;top:379.50px;width:19.5px;height:14.70px;text-align:center;font-size:8.2px;line-height:14.70px;color:#1a4a9a;font-weight:bold;">19</div>
<div style="position:absolute;left:0.00px;top:407.80px;width:24.80px;height:1.00px;background:#e1e3e1;"></div>
<div style="position:absolute;left:0;top:394.20px;width:19.5px;height:14.10px;text-align:center;font-size:8.2px;line-height:14.10px;color:#5f6368;font-weight:normal;">20</div>
<div style="position:absolute;left:0.00px;top:422.00px;width:24.80px;height:1.00px;background:#e1e3e1;"></div>
<div style="position:absolute;left:0;top:408.30px;width:19.5px;height:14.20px;text-align:center;font-size:8.2px;line-height:14.20px;color:#5f6368;font-weight:normal;">21</div>
<div style="position:absolute;left:0.00px;top:436.70px;width:24.80px;height:1.00px;background:#e1e3e1;"></div>
<div style="position:absolute;left:0;top:422.50px;width:19.5px;height:14.70px;text-align:center;font-size:8.2px;line-height:14.70px;color:#5f6368;font-weight:normal;">22</div>
<div style="position:absolute;left:0.00px;top:451.00px;width:24.80px;height:1.00px;background:#e1e3e1;"></div>
<div style="position:absolute;left:0;top:437.20px;width:19.5px;height:14.30px;text-align:center;font-size:8.2px;line-height:14.30px;color:#5f6368;font-weight:normal;">23</div>
<div style="position:absolute;left:0.00px;top:465.30px;width:24.80px;height:1.00px;background:#e1e3e1;"></div>
<div style="position:absolute;left:0;top:451.50px;width:19.5px;height:14.30px;text-align:center;font-size:8.2px;line-height:14.30px;color:#5f6368;font-weight:normal;">24</div>
<div style="position:absolute;left:0.00px;top:475.10px;width:24.80px;height:1.00px;background:#e1e3e1;"></div>
<div style="position:absolute;left:0;top:465.80px;width:19.5px;height:9.80px;text-align:center;font-size:8.2px;line-height:9.80px;color:#5f6368;font-weight:normal;">25</div>
<div style="position:absolute;left:0.00px;top:489.30px;width:24.80px;height:1.00px;background:#e1e3e1;"></div>
<div style="position:absolute;left:0;top:475.60px;width:19.5px;height:14.20px;text-align:center;font-size:8.2px;line-height:14.20px;color:#5f6368;font-weight:normal;">26</div>
<div style="position:absolute;left:0.00px;top:498.90px;width:24.80px;height:1.00px;background:#e1e3e1;"></div>
<div style="position:absolute;left:0;top:489.80px;width:19.5px;height:9.60px;text-align:center;font-size:8.2px;line-height:9.60px;color:#5f6368;font-weight:normal;">27</div>
<div style="position:absolute;left:0.00px;top:518.70px;width:24.80px;height:1.00px;background:#e1e3e1;"></div>
<div style="position:absolute;left:0;top:499.40px;width:19.5px;height:19.80px;text-align:center;font-size:8.2px;line-height:19.80px;color:#5f6368;font-weight:normal;">28</div>
<div style="position:absolute;left:0.00px;top:533.40px;width:24.80px;height:1.00px;background:#e1e3e1;"></div>
<div style="position:absolute;left:0;top:519.20px;width:19.5px;height:14.70px;text-align:center;font-size:8.2px;line-height:14.70px;color:#5f6368;font-weight:normal;">29</div>
<div style="position:absolute;left:0.00px;top:548.00px;width:24.80px;height:1.00px;background:#e1e3e1;"></div>
<div style="position:absolute;left:0;top:533.90px;width:19.5px;height:14.60px;text-align:center;font-size:8.2px;line-height:14.60px;color:#5f6368;font-weight:normal;">30</div>
<div style="position:absolute;left:0.00px;top:562.20px;width:24.80px;height:1.00px;background:#e1e3e1;"></div>
<div style="position:absolute;left:0;top:548.50px;width:19.5px;height:14.20px;text-align:center;font-size:8.2px;line-height:14.20px;color:#5f6368;font-weight:normal;">31</div>
<div style="position:absolute;left:0.00px;top:576.80px;width:24.80px;height:1.00px;background:#e1e3e1;"></div>
<div style="position:absolute;left:0;top:562.70px;width:19.5px;height:14.60px;text-align:center;font-size:8.2px;line-height:14.60px;color:#5f6368;font-weight:normal;">32</div>
<div style="position:absolute;left:0.00px;top:591.00px;width:24.80px;height:1.00px;background:#e1e3e1;"></div>
<div style="position:absolute;left:0;top:577.30px;width:19.5px;height:14.20px;text-align:center;font-size:8.2px;line-height:14.20px;color:#5f6368;font-weight:normal;">33</div>
<div style="position:absolute;left:0.00px;top:605.60px;width:24.80px;height:1.00px;background:#e1e3e1;"></div>
<div style="position:absolute;left:0;top:591.50px;width:19.5px;height:14.60px;text-align:center;font-size:8.2px;line-height:14.60px;color:#5f6368;font-weight:normal;">34</div>
<div style="position:absolute;left:0.00px;top:620.00px;width:24.80px;height:1.00px;background:#e1e3e1;"></div>
<div style="position:absolute;left:0;top:606.10px;width:19.5px;height:14.40px;text-align:center;font-size:8.2px;line-height:14.40px;color:#5f6368;font-weight:normal;">35</div>
<div style="position:absolute;left:0.00px;top:634.30px;width:24.80px;height:1.00px;background:#e1e3e1;"></div>
<div style="position:absolute;left:0;top:620.50px;width:19.5px;height:14.30px;text-align:center;font-size:8.2px;line-height:14.30px;color:#5f6368;font-weight:normal;">36</div>
<div style="position:absolute;left:0.00px;top:648.40px;width:24.80px;height:1.00px;background:#e1e3e1;"></div>
<div style="position:absolute;left:0;top:634.80px;width:19.5px;height:14.10px;text-align:center;font-size:8.2px;line-height:14.10px;color:#5f6368;font-weight:normal;">37</div>
<div style="position:absolute;left:0.00px;top:663.20px;width:24.80px;height:1.00px;background:#e1e3e1;"></div>
<div style="position:absolute;left:0;top:648.90px;width:19.5px;height:14.80px;text-align:center;font-size:8.2px;line-height:14.80px;color:#5f6368;font-weight:normal;">38</div>
<div style="position:absolute;left:0.00px;top:677.90px;width:24.80px;height:1.00px;background:#e1e3e1;"></div>
<div style="position:absolute;left:0;top:663.70px;width:19.5px;height:14.70px;text-align:center;font-size:8.2px;line-height:14.70px;color:#5f6368;font-weight:normal;">39</div>
<div style="position:absolute;left:0.00px;top:692.10px;width:24.80px;height:1.00px;background:#e1e3e1;"></div>
<div style="position:absolute;left:0;top:678.40px;width:19.5px;height:14.20px;text-align:center;font-size:8.2px;line-height:14.20px;color:#5f6368;font-weight:normal;">40</div>
<div style="position:absolute;left:0.00px;top:701.80px;width:24.80px;height:1.00px;background:#e1e3e1;"></div>
<div style="position:absolute;left:0;top:692.60px;width:19.5px;height:9.70px;text-align:center;font-size:8.2px;line-height:9.70px;color:#5f6368;font-weight:normal;">41</div>
<div style="position:absolute;left:0.00px;top:715.50px;width:24.80px;height:1.00px;background:#e1e3e1;"></div>
<div style="position:absolute;left:0;top:702.30px;width:19.5px;height:13.70px;text-align:center;font-size:8.2px;line-height:13.70px;color:#5f6368;font-weight:normal;">42</div>
<div style="position:absolute;left:0.00px;top:726.20px;width:24.80px;height:1.00px;background:#e1e3e1;"></div>
<div style="position:absolute;left:0;top:716.00px;width:19.5px;height:10.70px;text-align:center;font-size:8.2px;line-height:10.70px;color:#5f6368;font-weight:normal;">43</div>
<div style="position:absolute;left:0.00px;top:746.40px;width:24.80px;height:1.00px;background:#e1e3e1;"></div>
<div style="position:absolute;left:0;top:726.70px;width:19.5px;height:20.20px;text-align:center;font-size:8.2px;line-height:20.20px;color:#5f6368;font-weight:normal;">44</div>
<div style="position:absolute;left:0.00px;top:760.50px;width:24.80px;height:1.00px;background:#e1e3e1;"></div>
<div style="position:absolute;left:0;top:746.90px;width:19.5px;height:14.10px;text-align:center;font-size:8.2px;line-height:14.10px;color:#5f6368;font-weight:normal;">45</div>
<div style="position:absolute;left:0.00px;top:775.20px;width:24.80px;height:1.00px;background:#e1e3e1;"></div>
<div style="position:absolute;left:0;top:761.00px;width:19.5px;height:14.70px;text-align:center;font-size:8.2px;line-height:14.70px;color:#5f6368;font-weight:normal;">46</div>
<div style="position:absolute;left:0.00px;top:789.30px;width:24.80px;height:1.00px;background:#e1e3e1;"></div>
<div style="position:absolute;left:0;top:775.70px;width:19.5px;height:14.10px;text-align:center;font-size:8.2px;line-height:14.10px;color:#5f6368;font-weight:normal;">47</div>
<div style="position:absolute;left:0.00px;top:803.60px;width:24.80px;height:1.00px;background:#e1e3e1;"></div>
<div style="position:absolute;left:0;top:789.80px;width:19.5px;height:14.30px;text-align:center;font-size:8.2px;line-height:14.30px;color:#5f6368;font-weight:normal;">48</div>
<div style="position:absolute;left:0.00px;top:817.90px;width:24.80px;height:1.00px;background:#e1e3e1;"></div>
<div style="position:absolute;left:0;top:804.10px;width:19.5px;height:14.30px;text-align:center;font-size:8.2px;line-height:14.30px;color:#5f6368;font-weight:normal;">49</div>
<div style="position:absolute;left:0.00px;top:832.10px;width:24.80px;height:1.00px;background:#e1e3e1;"></div>
<div style="position:absolute;left:0;top:818.40px;width:19.5px;height:14.20px;text-align:center;font-size:8.2px;line-height:14.20px;color:#5f6368;font-weight:normal;">50</div>
<div style="position:absolute;left:0.00px;top:846.80px;width:24.80px;height:1.00px;background:#e1e3e1;"></div>
<div style="position:absolute;left:0;top:832.60px;width:19.5px;height:14.70px;text-align:center;font-size:8.2px;line-height:14.70px;color:#5f6368;font-weight:normal;">51</div>
<div style="position:absolute;left:0.00px;top:861.10px;width:24.80px;height:1.00px;background:#e1e3e1;"></div>
<div style="position:absolute;left:0;top:847.30px;width:19.5px;height:14.30px;text-align:center;font-size:8.2px;line-height:14.30px;color:#5f6368;font-weight:normal;">52</div>
<div style="position:absolute;left:0.00px;top:875.40px;width:24.80px;height:1.00px;background:#e1e3e1;"></div>
<div style="position:absolute;left:0;top:861.60px;width:19.5px;height:14.30px;text-align:center;font-size:8.2px;line-height:14.30px;color:#5f6368;font-weight:normal;">53</div>
<div style="position:absolute;left:0.00px;top:889.70px;width:24.80px;height:1.00px;background:#e1e3e1;"></div>
<div style="position:absolute;left:0;top:875.90px;width:19.5px;height:14.30px;text-align:center;font-size:8.2px;line-height:14.30px;color:#5f6368;font-weight:normal;">54</div>
<div style="position:absolute;left:0.00px;top:904.40px;width:24.80px;height:1.00px;background:#e1e3e1;"></div>
<div style="position:absolute;left:0;top:890.20px;width:19.5px;height:14.70px;text-align:center;font-size:8.2px;line-height:14.70px;color:#5f6368;font-weight:normal;">55</div>
<div style="position:absolute;left:0.00px;top:919.00px;width:24.80px;height:1.00px;background:#e1e3e1;"></div>
<div style="position:absolute;left:0;top:904.90px;width:19.5px;height:14.60px;text-align:center;font-size:8.2px;line-height:14.60px;color:#5f6368;font-weight:normal;">56</div>
<div style="position:absolute;left:0.00px;top:928.60px;width:24.80px;height:1.00px;background:#e1e3e1;"></div>
<div style="position:absolute;left:0;top:919.50px;width:19.5px;height:9.60px;text-align:center;font-size:8.2px;line-height:9.60px;color:#5f6368;font-weight:normal;">57</div>
<div style="position:absolute;left:0.00px;top:942.90px;width:24.80px;height:1.00px;background:#e1e3e1;"></div>
<div style="position:absolute;left:0;top:929.10px;width:19.5px;height:14.30px;text-align:center;font-size:8.2px;line-height:14.30px;color:#5f6368;font-weight:normal;">58</div>
<div style="position:absolute;left:0.00px;top:957.00px;width:24.80px;height:1.00px;background:#e1e3e1;"></div>
<div style="position:absolute;left:0;top:943.40px;width:19.5px;height:14.10px;text-align:center;font-size:8.2px;line-height:14.10px;color:#5f6368;font-weight:normal;">59</div>
<div style="position:absolute;left:0.00px;top:971.70px;width:24.80px;height:1.00px;background:#e1e3e1;"></div>
<div style="position:absolute;left:0;top:957.50px;width:19.5px;height:14.70px;text-align:center;font-size:8.2px;line-height:14.70px;color:#5f6368;font-weight:normal;">60</div>
<div style="position:absolute;left:0.00px;top:985.80px;width:24.80px;height:1.00px;background:#e1e3e1;"></div>
<div style="position:absolute;left:0;top:972.20px;width:19.5px;height:14.10px;text-align:center;font-size:8.2px;line-height:14.10px;color:#5f6368;font-weight:normal;">61</div>
<div style="position:absolute;left:0.00px;top:1000.50px;width:24.80px;height:1.00px;background:#e1e3e1;"></div>
<div style="position:absolute;left:0;top:986.30px;width:19.5px;height:14.70px;text-align:center;font-size:8.2px;line-height:14.70px;color:#5f6368;font-weight:normal;">62</div>
<div style="position:absolute;left:0.00px;top:1014.90px;width:24.80px;height:1.00px;background:#e1e3e1;"></div>
<div style="position:absolute;left:0;top:1001.00px;width:19.5px;height:14.40px;text-align:center;font-size:8.2px;line-height:14.40px;color:#5f6368;font-weight:normal;">63</div>
<div style="position:absolute;left:0.00px;top:1029.10px;width:24.80px;height:1.00px;background:#e1e3e1;"></div>
<div style="position:absolute;left:0;top:1015.40px;width:19.5px;height:14.20px;text-align:center;font-size:8.2px;line-height:14.20px;color:#5f6368;font-weight:normal;">64</div>
<div style="position:absolute;left:0.00px;top:1043.90px;width:24.80px;height:1.00px;background:#e1e3e1;"></div>
<div style="position:absolute;left:0;top:1029.60px;width:19.5px;height:14.80px;text-align:center;font-size:8.2px;line-height:14.80px;color:#5f6368;font-weight:normal;">65</div>
<div style="position:absolute;left:24.80px;top:111.00px;width:1.00px;height:935.00px;background:#c7c7c7;"></div>
<div style="position:absolute;left:0.00px;top:1046.00px;width:1200.00px;height:1.00px;background:#dadce0;"></div>
<div style="position:absolute;left:25.00px;top:1047.00px;width:1175.00px;height:9.00px;background:#ffffff;"></div>
<div style="position:absolute;left:0.00px;top:1047.00px;width:25.00px;height:9.00px;background:#f1f3f4;"></div>
<div style="position:absolute;left:0.00px;top:1056.00px;width:1200.00px;height:1.00px;background:#dadce0;"></div>
<div style="position:absolute;left:0.00px;top:1057.00px;width:1200.00px;height:33.00px;background:#f9fbfd;"></div>
<div style="position:absolute;left:44.00px;top:1074.30px;width:7.00px;height:1.20px;background:#444746;"></div>
<div style="position:absolute;left:46.90px;top:1071.30px;width:1.20px;height:7.00px;background:#444746;"></div>
<div style="position:absolute;left:71.30px;top:1071.60px;width:9.70px;height:1.10px;background:#444746;"></div>
<div style="position:absolute;left:71.30px;top:1074.30px;width:9.70px;height:1.10px;background:#444746;"></div>
<div style="position:absolute;left:71.30px;top:1077.00px;width:9.70px;height:1.10px;background:#444746;"></div>
<div style="position:absolute;top:1073.96px;font-size:12.1px;line-height:12.1px;color:#444746;font-weight:normal;white-space:nowrap;font-family:'Liberation Sans', sans-serif;left:110.00px;">CRM</div>
<div style="position:absolute;left:145.5px;top:1078.2px;width:0;height:0;border-left:3px solid transparent;border-right:3px solid transparent;border-top:3px solid #444746;"></div>
<div style="position:absolute;left:161.00px;top:1065.50px;width:101.50px;height:24.50px;background:#e3eaf6;"></div>
<div style="position:absolute;top:1072.83px;font-size:13.9px;line-height:13.9px;color:#2c5bc4;font-weight:normal;white-space:nowrap;font-family:'Liberation Sans', sans-serif;left:171.00px;-webkit-text-stroke:0.4px #2c5bc4;">Dashboard</div>
<div style="position:absolute;left:247.5px;top:1078.2px;width:0;height:0;border-left:3px solid transparent;border-right:3px solid transparent;border-top:3px solid #0b57d0;"></div>
<div style="position:absolute;left:58.75px;top:119px;font-family:'Liberation Serif',serif;font-size:29.4px;line-height:29.4px;color:#444444;white-space:nowrap;transform:scaleX(0.864);transform-origin:0 0;">CRM DASHBOARD</div>
<div style="position:absolute;left:51.00px;top:164px;width:200.50px;height:71px;border:1px solid #f8e7ea;"></div>
<div style="position:absolute;left:51.00px;top:165.50px;width:4.00px;height:67.80px;background:#6389a8;"></div>
<div style="position:absolute;top:182.30px;font-size:9.8px;line-height:9.8px;color:#3c3c3c;font-weight:normal;white-space:nowrap;font-family:'Liberation Sans', sans-serif;right:966.25px;text-align:right;">Total Revenue</div>
<div style="position:absolute;top:198.13px;font-size:15.2px;line-height:15.2px;color:#000000;font-weight:bold;white-space:nowrap;font-family:'Liberation Sans', sans-serif;right:966.25px;text-align:right;">$9,000</div>
<div style="position:absolute;left:267.00px;top:164px;width:186.00px;height:71px;border:1px solid #f8e7ea;"></div>
<div style="position:absolute;left:267.00px;top:165.50px;width:4.25px;height:67.80px;background:#6389a8;"></div>
<div style="position:absolute;top:182.30px;font-size:9.8px;line-height:9.8px;color:#3c3c3c;font-weight:normal;white-space:nowrap;font-family:'Liberation Sans', sans-serif;right:765.00px;text-align:right;">Total Leads</div>
<div style="position:absolute;top:198.13px;font-size:15.2px;line-height:15.2px;color:#000000;font-weight:bold;white-space:nowrap;font-family:'Liberation Sans', sans-serif;right:765.00px;text-align:right;">22</div>
<div style="position:absolute;left:488.75px;top:164px;width:201.15px;height:71px;border:1px solid #f8e7ea;"></div>
<div style="position:absolute;left:488.75px;top:165.50px;width:4.25px;height:67.80px;background:#6389a8;"></div>
<div style="position:absolute;top:182.30px;font-size:9.8px;line-height:9.8px;color:#3c3c3c;font-weight:normal;white-space:nowrap;font-family:'Liberation Sans', sans-serif;right:528.30px;text-align:right;">Active Clients</div>
<div style="position:absolute;top:198.13px;font-size:15.2px;line-height:15.2px;color:#000000;font-weight:bold;white-space:nowrap;font-family:'Liberation Sans', sans-serif;right:528.30px;text-align:right;">6</div>
<div style="position:absolute;left:705.00px;top:164px;width:201.10px;height:71px;border:1px solid #f8e7ea;"></div>
<div style="position:absolute;left:705.00px;top:165.50px;width:4.80px;height:67.80px;background:#6389a8;"></div>
<div style="position:absolute;top:182.30px;font-size:9.8px;line-height:9.8px;color:#3c3c3c;font-weight:normal;white-space:nowrap;font-family:'Liberation Sans', sans-serif;right:312.00px;text-align:right;">Overdue Items</div>
<div style="position:absolute;top:198.13px;font-size:15.2px;line-height:15.2px;color:#000000;font-weight:bold;white-space:nowrap;font-family:'Liberation Sans', sans-serif;right:312.00px;text-align:right;">13</div>
<svg style="left:60px;top:184px" width="42" height="42" viewBox="0 0 42 42"><circle cx="20.9" cy="20.75" r="19.4" fill="none" stroke="#e0e0e0" stroke-width="1.3"/>
<path d="M21 6.3L18.3 10.2H23.7Z M21 35.2L18.3 31.2H23.7Z" fill="none" stroke="#dcdcdc" stroke-width="1.2" stroke-linejoin="round"/>
<path d="M27.5 14.2C27.3 11 24.3 9.6 21 9.6C17.3 9.6 14.4 11.4 14.4 14.6C14.4 18.4 18 19.6 21 20.6C24.2 21.6 27.8 22.8 27.8 26.6C27.8 29.9 24.9 31.7 21 31.7C17 31.7 14.2 29.8 14 26.4" fill="none" stroke="#dcdcdc" stroke-width="4.6" stroke-linecap="round"/><path d="M27.5 14.2C27.3 11 24.3 9.6 21 9.6C17.3 9.6 14.4 11.4 14.4 14.6C14.4 18.4 18 19.6 21 20.6C24.2 21.6 27.8 22.8 27.8 26.6C27.8 29.9 24.9 31.7 21 31.7C17 31.7 14.2 29.8 14 26.4" fill="none" stroke="#ffffff" stroke-width="2.2" stroke-linecap="round"/></svg>
<svg style="left:275px;top:180px" width="45" height="48" viewBox="0 0 45 48"><circle cx="21.9" cy="13.75" r="11" fill="none" stroke="#e0e0e0" stroke-width="2"/>
<path d="M3 45.5 V41 A19 17 0 0 1 41 41 V45.5 Z" fill="none" stroke="#e0e0e0" stroke-width="2" stroke-linejoin="round"/></svg>
<svg style="left:510px;top:178px" width="60" height="50" viewBox="0 0 60 50"><circle cx="29" cy="9" r="5.8" fill="none" stroke="#e8e8e8" stroke-width="1.2"/><path d="M18.5 25 V20.725 A10.5 5.7 0 0 1 39.5 20.725 V25 Z" fill="none" stroke="#e8e8e8" stroke-width="1.2" stroke-linejoin="round"/><circle cx="14" cy="30.5" r="5.5" fill="none" stroke="#e8e8e8" stroke-width="1.2"/><path d="M4.5 45 V41.4 A9.5 4.8 0 0 1 23.5 41.4 V45 Z" fill="none" stroke="#e8e8e8" stroke-width="1.2" stroke-linejoin="round"/><circle cx="43" cy="30.5" r="5.5" fill="none" stroke="#e8e8e8" stroke-width="1.2"/><path d="M33.5 45 V41.4 A9.5 4.8 0 0 1 52.5 41.4 V45 Z" fill="none" stroke="#e8e8e8" stroke-width="1.2" stroke-linejoin="round"/></svg>
<svg style="left:730px;top:182px" width="50" height="44" viewBox="0 0 50 44"><path d="M25 4 L45.5 39.5 H4.5 Z" fill="none" stroke="#e0e0e0" stroke-width="2" stroke-linejoin="round"/>
<path d="M23.3 16 h3.4 l-0.7 14 h-2 z" fill="none" stroke="#e0e0e0" stroke-width="1.3"/><circle cx="25" cy="34" r="1.6" fill="none" stroke="#e0e0e0" stroke-width="1.2"/></svg>
<div style="position:absolute;left:39.20px;top:262.30px;width:425.20px;height:213.90px;border:1px solid #f6e1e4;border-left-color:#eee9ea;border-radius:2px;"></div>
<div style="position:absolute;left:50.20px;top:272.60px;width:403.30px;height:19.80px;background:#678fab;"></div>
<div style="position:absolute;top:276.22px;font-size:13.8px;line-height:13.8px;color:#ffffff;font-weight:bold;white-space:nowrap;font-family:'Liberation Sans', sans-serif;left:-48.15px;width:600px;text-align:center;-webkit-text-stroke:0.45px #ffffff;">ACTION ITEMS</div>
<div style="position:absolute;left:477.40px;top:262.40px;width:439.80px;height:213.20px;border:1px solid #f6e1e4;border-left-color:#eee9ea;border-radius:2px;"></div>
<div style="position:absolute;left:488.40px;top:272.90px;width:418.60px;height:19.60px;background:#678fab;"></div>
<div style="position:absolute;top:276.52px;font-size:13.8px;line-height:13.8px;color:#ffffff;font-weight:bold;white-space:nowrap;font-family:'Liberation Sans', sans-serif;left:397.70px;width:600px;text-align:center;-webkit-text-stroke:0.45px #ffffff;">LEAD STATUS</div>
<div style="position:absolute;left:39.20px;top:489.20px;width:425.20px;height:213.20px;border:1px solid #f6e1e4;border-left-color:#eee9ea;border-radius:2px;"></div>
<div style="position:absolute;left:50.20px;top:499.00px;width:403.30px;height:19.50px;background:#678fab;"></div>
<div style="position:absolute;top:502.62px;font-size:13.8px;line-height:13.8px;color:#ffffff;font-weight:bold;white-space:nowrap;font-family:'Liberation Sans', sans-serif;left:-48.15px;width:600px;text-align:center;-webkit-text-stroke:0.45px #ffffff;">REVENUE</div>
<div style="position:absolute;left:477.70px;top:489.60px;width:439.50px;height:212.70px;border:1px solid #f6e1e4;border-left-color:#eee9ea;border-radius:2px;"></div>
<div style="position:absolute;top:503.28px;font-size:13.25px;line-height:13.25px;color:#000000;font-weight:bold;white-space:nowrap;font-family:'Liberation Sans', sans-serif;left:400.00px;width:600px;text-align:center;-webkit-text-stroke:0.45px #000000;">PROBABILITY OF CLOSE</div>
<div style="position:absolute;left:39.20px;top:716.00px;width:425.20px;height:213.20px;border:1px solid #f6e1e4;border-left-color:#eee9ea;border-radius:2px;"></div>
<div style="position:absolute;left:50.20px;top:725.90px;width:403.30px;height:20.20px;background:#678fab;"></div>
<div style="position:absolute;top:729.52px;font-size:13.8px;line-height:13.8px;color:#ffffff;font-weight:bold;white-space:nowrap;font-family:'Liberation Sans', sans-serif;left:-48.15px;width:600px;text-align:center;-webkit-text-stroke:0.45px #ffffff;">PROGRAM STATUS</div>
<div style="position:absolute;left:477.70px;top:716.30px;width:439.50px;height:212.30px;border:1px solid #f6e1e4;border-left-color:#eee9ea;border-radius:2px;"></div>
<div style="position:absolute;left:493.00px;top:726.10px;width:414.00px;height:19.90px;background:#678fab;"></div>
<div style="position:absolute;top:729.72px;font-size:13.8px;line-height:13.8px;color:#ffffff;font-weight:bold;white-space:nowrap;font-family:'Liberation Sans', sans-serif;left:400.00px;width:600px;text-align:center;-webkit-text-stroke:0.45px #ffffff;">LEAD SOURCE</div>
<svg style="left:185.90px;top:311.10px" width="132" height="132" viewBox="-66 -66 132 132"><path d="M0 0 L0.00 -66.00 A66 66 0 1 1 -44.88 48.39 Z" fill="#678fab"/><path d="M0 0 L-44.88 48.39 A66 66 0 0 1 -0.00 -66.00 Z" fill="#d5f6ef"/></svg>
<div style="position:absolute;top:345.66px;font-size:8.2px;line-height:8.2px;color:#222222;font-weight:normal;white-space:nowrap;font-family:'Liberation Sans', sans-serif;left:59.30px;">Upcoming</div>
<div style="position:absolute;left:59.30px;top:353.60px;width:134.00px;height:1.00px;background:#a8a8a8;"></div>
<div style="position:absolute;top:355.46px;font-size:8.2px;line-height:8.2px;color:#b5b5b5;font-weight:normal;white-space:nowrap;font-family:'Liberation Sans', sans-serif;left:59.30px;">38.1%</div>
<div style="position:absolute;top:391.26px;font-size:8.2px;line-height:8.2px;color:#222222;font-weight:normal;white-space:nowrap;font-family:'Liberation Sans', sans-serif;right:757.10px;text-align:right;">Overdue</div>
<div style="position:absolute;left:313.30px;top:399.50px;width:129.60px;height:1.00px;background:#c8c8c8;"></div>
<div style="position:absolute;top:401.66px;font-size:8.2px;line-height:8.2px;color:#b5b5b5;font-weight:normal;white-space:nowrap;font-family:'Liberation Sans', sans-serif;right:757.10px;text-align:right;">61.9%</div>
<svg style="left:631.90px;top:536.50px" width="140" height="140" viewBox="-70 -70 140 140"><path d="M0 0 L0.00 -70.00 A70 70 0 0 1 19.53 67.22 Z" fill="#3b7686"/><path d="M0 0 L19.53 67.22 A70 70 0 0 1 -69.27 -10.08 Z" fill="#678fab"/><path d="M0 0 L-69.27 -10.08 A70 70 0 0 1 -0.00 -70.00 Z" fill="#d5f6ef"/></svg>
<svg style="left:502.00px;top:545.80px" width="10" height="10" viewBox="0 0 10 10"><defs><radialGradient id="g507550" cx="0.4" cy="0.35" r="0.7"><stop offset="0" stop-color="#7ee06a"/><stop offset="1" stop-color="#2f9a2a"/></radialGradient></defs><circle cx="5" cy="5" r="4.9" fill="url(#g507550)"/></svg>
<div style="position:absolute;top:547.76px;font-size:8.2px;line-height:8.2px;color:#222222;font-weight:normal;white-space:nowrap;font-family:'Liberation Sans', sans-serif;left:515.30px;">High</div>
<div style="position:absolute;left:502.00px;top:555.70px;width:157.20px;height:1.00px;background:#a8a8a8;"></div>
<div style="position:absolute;top:557.76px;font-size:8.2px;line-height:8.2px;color:#b5b5b5;font-weight:normal;white-space:nowrap;font-family:'Liberation Sans', sans-serif;left:502.00px;">22.7%</div>
<svg style="left:502.00px;top:645.80px" width="10" height="10" viewBox="0 0 10 10"><defs><radialGradient id="g507650" cx="0.4" cy="0.35" r="0.7"><stop offset="0" stop-color="#f5b25a"/><stop offset="1" stop-color="#d4731c"/></radialGradient></defs><circle cx="5" cy="5" r="4.9" fill="url(#g507650)"/></svg>
<div style="position:absolute;top:647.76px;font-size:8.2px;line-height:8.2px;color:#222222;font-weight:normal;white-space:nowrap;font-family:'Liberation Sans', sans-serif;left:515.30px;">Medium</div>
<div style="position:absolute;left:502.00px;top:655.80px;width:156.30px;height:1.00px;background:#a8a8a8;"></div>
<div style="position:absolute;top:657.76px;font-size:8.2px;line-height:8.2px;color:#b5b5b5;font-weight:normal;white-space:nowrap;font-family:'Liberation Sans', sans-serif;left:502.00px;">31.8%</div>
<svg style="left:873.00px;top:586.30px" width="10" height="10" viewBox="0 0 10 10"><defs><radialGradient id="g878591" cx="0.4" cy="0.35" r="0.7"><stop offset="0" stop-color="#f06a55"/><stop offset="1" stop-color="#c42a1c"/></radialGradient></defs><circle cx="5" cy="5" r="4.9" fill="url(#g878591)"/></svg>
<div style="position:absolute;top:587.76px;font-size:8.2px;line-height:8.2px;color:#222222;font-weight:normal;white-space:nowrap;font-family:'Liberation Sans', sans-serif;right:298.70px;text-align:right;">Low</div>
<div style="position:absolute;left:767.30px;top:596.20px;width:134.00px;height:1.00px;background:#c8c8c8;"></div>
<div style="position:absolute;top:598.06px;font-size:8.2px;line-height:8.2px;color:#b5b5b5;font-weight:normal;white-space:nowrap;font-family:'Liberation Sans', sans-serif;right:298.70px;text-align:right;">45.5%</div>
<div style="position:absolute;top:431.67px;font-size:7px;line-height:7px;color:#444444;font-weight:normal;white-space:nowrap;font-family:'Liberation Sans', sans-serif;left:206.50px;width:600px;text-align:center;">0</div>
<div style="position:absolute;top:407.11px;font-size:7px;line-height:7px;color:#444444;font-weight:normal;white-space:nowrap;font-family:'Liberation Sans', sans-serif;left:206.50px;width:600px;text-align:center;">1</div>
<div style="position:absolute;top:382.55px;font-size:7px;line-height:7px;color:#444444;font-weight:normal;white-space:nowrap;font-family:'Liberation Sans', sans-serif;left:206.50px;width:600px;text-align:center;">2</div>
<div style="position:absolute;top:357.99px;font-size:7px;line-height:7px;color:#444444;font-weight:normal;white-space:nowrap;font-family:'Liberation Sans', sans-serif;left:206.50px;width:600px;text-align:center;">3</div>
<div style="position:absolute;top:333.43px;font-size:7px;line-height:7px;color:#444444;font-weight:normal;white-space:nowrap;font-family:'Liberation Sans', sans-serif;left:206.50px;width:600px;text-align:center;">4</div>
<div style="position:absolute;top:308.87px;font-size:7px;line-height:7px;color:#444444;font-weight:normal;white-space:nowrap;font-family:'Liberation Sans', sans-serif;left:206.50px;width:600px;text-align:center;">5</div>
<div style="position:absolute;left:534.60px;top:336.98px;width:40.30px;height:98.32px;background:#678fab;border-radius:1px 1px 0 0;"></div>
<div style="position:absolute;left:598.30px;top:336.98px;width:40.00px;height:98.32px;background:#d9f8d9;border-radius:1px 1px 0 0;"></div>
<div style="position:absolute;left:660.30px;top:361.56px;width:40.70px;height:73.74px;background:#1d4560;border-radius:1px 1px 0 0;"></div>
<div style="position:absolute;left:723.80px;top:386.14px;width:40.40px;height:49.16px;background:#fdf8e6;border-radius:1px 1px 0 0;"></div>
<div style="position:absolute;left:785.80px;top:312.40px;width:40.40px;height:122.90px;background:#cfe0f1;border-radius:1px 1px 0 0;"></div>
<div style="position:absolute;left:848.60px;top:336.98px;width:40.40px;height:98.32px;background:#7aa5d8;border-radius:1px 1px 0 0;"></div>
<svg style="left:542.30px;top:436.90px" width="8.6" height="8.6" viewBox="0 0 8.6 8.6"><rect x="0.3" y="0.8" width="8.4" height="7.6" rx="1.5" fill="#8aa3c4"/><rect x="0.8" y="1.3" width="7.4" height="3.3" rx="1" fill="#a6bad6"/><path d="M1.8 3.5h1.8M4.5 4.5h2.2" stroke="#fff" stroke-width="0.8"/></svg>
<div style="position:absolute;top:439.14px;font-size:6.8px;line-height:6.8px;color:#222222;font-weight:normal;white-space:nowrap;font-family:'Liberation Sans', sans-serif;left:553.30px;-webkit-text-stroke:0.2px #222;">New</div>
<svg style="left:598.60px;top:436.90px" width="8.6" height="8.6" viewBox="0 0 8.6 8.6"><rect x="0.2" y="0.4" width="8.4" height="8.2" rx="1.6" fill="#4bb543"/><path d="M2 4.6l1.8 1.9 3-3.8" fill="none" stroke="#fff" stroke-width="1.3"/></svg>
<div style="position:absolute;top:439.14px;font-size:6.8px;line-height:6.8px;color:#222222;font-weight:normal;white-space:nowrap;font-family:'Liberation Sans', sans-serif;left:609.30px;-webkit-text-stroke:0.2px #222;">Qualified</div>
<svg style="left:657.90px;top:436.90px" width="8.6" height="8.6" viewBox="0 0 8.6 8.6"><path d="M1 1l6.8 6.8M7.8 1L1 7.8" stroke="#e0342a" stroke-width="1.9"/></svg>
<div style="position:absolute;top:439.14px;font-size:6.8px;line-height:6.8px;color:#222222;font-weight:normal;white-space:nowrap;font-family:'Liberation Sans', sans-serif;left:668.30px;-webkit-text-stroke:0.2px #222;">Unqualified</div>
<svg style="left:723.50px;top:436.90px" width="8.6" height="8.6" viewBox="0 0 8.6 8.6"><path d="M1 7.5Q4 6 6 2.5" fill="none" stroke="#58a33a" stroke-width="1"/><path d="M6 2.5q1.5-1.5 2.6-1.3q-0.2 1.5-2.6 1.3z" fill="#6cc24a"/><path d="M3.3 5.6q-1.8-0.2-2.2 0.6q1.2 0.6 2.2-0.6z" fill="#6cc24a"/></svg>
<div style="position:absolute;top:439.14px;font-size:6.8px;line-height:6.8px;color:#222222;font-weight:normal;white-space:nowrap;font-family:'Liberation Sans', sans-serif;left:734.50px;-webkit-text-stroke:0.2px #222;">Nurturing</div>
<svg style="left:792.60px;top:436.90px" width="8.6" height="8.6" viewBox="0 0 8.6 8.6"><path d="M0.8 8.2L3 1.8 7.2 6z" fill="#e8b84a"/><path d="M4.5 1.2l1 1M7.2 2.6l1-0.8M6.5 0.5v1.2" stroke="#d65a8a" stroke-width="0.8"/><path d="M2.2 5.2l1.8 1.8" stroke="#c2413b" stroke-width="0.9"/></svg>
<div style="position:absolute;top:439.14px;font-size:6.8px;line-height:6.8px;color:#222222;font-weight:normal;white-space:nowrap;font-family:'Liberation Sans', sans-serif;left:804.20px;-webkit-text-stroke:0.2px #222;">Won</div>
<svg style="left:856.90px;top:436.90px" width="8.6" height="8.6" viewBox="0 0 8.6 8.6"><path d="M1 1l6.8 6.8M7.8 1L1 7.8" stroke="#e0342a" stroke-width="1.9"/></svg>
<div style="position:absolute;top:439.14px;font-size:6.8px;line-height:6.8px;color:#222222;font-weight:normal;white-space:nowrap;font-family:'Liberation Sans', sans-serif;left:867.30px;-webkit-text-stroke:0.2px #222;">Lost</div>
<div style="position:absolute;left:88.50px;top:555.30px;width:307.10px;height:22.30px;background:#678fab;border-radius:1px 1px 0 0;"></div>
<div style="position:absolute;left:88.50px;top:590.20px;width:324.70px;height:22.30px;background:#ed7a45;border-radius:1px 1px 0 0;"></div>
<div style="position:absolute;left:88.50px;top:625.70px;width:173.30px;height:22.10px;background:#e0a0a0;border-radius:1px 1px 0 0;"></div>
<div style="position:absolute;top:562.64px;font-size:6.8px;line-height:6.8px;color:#222222;font-weight:normal;white-space:nowrap;font-family:'Liberation Sans', sans-serif;right:1114.90px;text-align:right;">Potential</div>
<div style="position:absolute;top:597.84px;font-size:6.8px;line-height:6.8px;color:#222222;font-weight:normal;white-space:nowrap;font-family:'Liberation Sans', sans-serif;right:1114.90px;text-align:right;">Gained</div>
<div style="position:absolute;top:633.24px;font-size:6.8px;line-height:6.8px;color:#222222;font-weight:normal;white-space:nowrap;font-family:'Liberation Sans', sans-serif;right:1114.90px;text-align:right;">Lost</div>
<div style="position:absolute;top:664.04px;font-size:6.8px;line-height:6.8px;color:#222222;font-weight:normal;white-space:nowrap;font-family:'Liberation Sans', sans-serif;left:-211.30px;width:600px;text-align:center;">$0</div>
<div style="position:absolute;top:664.04px;font-size:6.8px;line-height:6.8px;color:#222222;font-weight:normal;white-space:nowrap;font-family:'Liberation Sans', sans-serif;left:-121.00px;width:600px;text-align:center;">$2,500</div>
<div style="position:absolute;top:664.04px;font-size:6.8px;line-height:6.8px;color:#222222;font-weight:normal;white-space:nowrap;font-family:'Liberation Sans', sans-serif;left:-31.00px;width:600px;text-align:center;">$5,000</div>
<div style="position:absolute;top:664.04px;font-size:6.8px;line-height:6.8px;color:#222222;font-weight:normal;white-space:nowrap;font-family:'Liberation Sans', sans-serif;left:59.30px;width:600px;text-align:center;">$7,500</div>
<div style="position:absolute;top:881.77px;font-size:7px;line-height:7px;color:#444444;font-weight:normal;white-space:nowrap;font-family:'Liberation Sans', sans-serif;left:-231.30px;width:600px;text-align:center;">0</div>
<div style="position:absolute;top:843.57px;font-size:7px;line-height:7px;color:#444444;font-weight:normal;white-space:nowrap;font-family:'Liberation Sans', sans-serif;left:-231.30px;width:600px;text-align:center;">2</div>
<div style="position:absolute;top:805.37px;font-size:7px;line-height:7px;color:#444444;font-weight:normal;white-space:nowrap;font-family:'Liberation Sans', sans-serif;left:-231.30px;width:600px;text-align:center;">4</div>
<div style="position:absolute;top:767.17px;font-size:7px;line-height:7px;color:#444444;font-weight:normal;white-space:nowrap;font-family:'Liberation Sans', sans-serif;left:-231.30px;width:600px;text-align:center;">6</div>
<div style="position:absolute;left:95.30px;top:809.02px;width:37.70px;height:76.88px;background:#1d4560;border-radius:1px 1px 0 0;"></div>
<div style="position:absolute;left:154.00px;top:770.58px;width:38.20px;height:115.32px;background:#ec7a44;border-radius:1px 1px 0 0;"></div>
<div style="position:absolute;left:213.90px;top:847.46px;width:38.30px;height:38.44px;background:#f0a035;border-radius:1px 1px 0 0;"></div>
<div style="position:absolute;left:273.00px;top:789.80px;width:37.80px;height:96.10px;background:#7aa5d8;border-radius:1px 1px 0 0;"></div>
<div style="position:absolute;left:332.20px;top:847.46px;width:37.50px;height:38.44px;background:#fdf4f0;border-radius:1px 1px 0 0;"></div>
<div style="position:absolute;left:391.20px;top:847.46px;width:38.00px;height:38.44px;background:#678fab;border-radius:1px 1px 0 0;"></div>
<svg style="left:91.70px;top:887.30px" width="8.6" height="8.6" viewBox="0 0 8.6 8.6"><path d="M0.3 2.6l1.2-0.4 2.6 2 3.5 0.9q0.8 0.5 0 1.1l-3.8-0.6z" fill="#5560a8"/><path d="M4.6 4.7l1.8 0.5v1.2" stroke="#8a86d0" stroke-width="1.1"/><path d="M2.5 8.5h6" stroke="#9ba39b" stroke-width="1.1"/></svg>
<div style="position:absolute;top:889.54px;font-size:6.8px;line-height:6.8px;color:#222222;font-weight:normal;white-space:nowrap;font-family:'Liberation Sans', sans-serif;left:101.80px;-webkit-text-stroke:0.2px #222;">Onboarding</div>
<svg style="left:158.70px;top:887.30px" width="8.6" height="8.6" viewBox="0 0 8.6 8.6"><defs><radialGradient id="eg" cx="0.4" cy="0.35" r="0.7"><stop offset="0" stop-color="#7ee06a"/><stop offset="1" stop-color="#2f9a2a"/></radialGradient></defs><circle cx="4.3" cy="4.3" r="4.2" fill="url(#eg)"/></svg>
<div style="position:absolute;top:889.54px;font-size:6.8px;line-height:6.8px;color:#222222;font-weight:normal;white-space:nowrap;font-family:'Liberation Sans', sans-serif;left:169.70px;-webkit-text-stroke:0.2px #222;">Active</div>
<svg style="left:209.00px;top:887.30px" width="8.6" height="8.6" viewBox="0 0 8.6 8.6"><path d="M0.5 6.6l3.8-1.4 3.3-2.2q0.9-0.3 0.7 0.6l-3.4 2.6-4 0.9z" fill="#5560a8"/><path d="M4.8 4.6l1.2-1.8" stroke="#8a86d0" stroke-width="1.1"/><path d="M0.5 8.5h6" stroke="#9ba39b" stroke-width="1.1"/></svg>
<div style="position:absolute;top:889.54px;font-size:6.8px;line-height:6.8px;color:#222222;font-weight:normal;white-space:nowrap;font-family:'Liberation Sans', sans-serif;left:220.00px;-webkit-text-stroke:0.2px #222;">Offboarding</div>
<svg style="left:270.00px;top:887.30px" width="8.6" height="8.6" viewBox="0 0 8.6 8.6"><rect x="0.2" y="0.4" width="8.4" height="8.2" rx="1.6" fill="#4bb543"/><path d="M2 4.6l1.8 1.9 3-3.8" fill="none" stroke="#fff" stroke-width="1.3"/></svg>
<div style="position:absolute;top:889.54px;font-size:6.8px;line-height:6.8px;color:#222222;font-weight:normal;white-space:nowrap;font-family:'Liberation Sans', sans-serif;left:280.80px;-webkit-text-stroke:0.2px #222;">Completed</div>
<svg style="left:336.30px;top:887.30px" width="8.6" height="8.6" viewBox="0 0 8.6 8.6"><rect x="0.3" y="0.3" width="8.2" height="8.2" rx="1.4" fill="#7a96c2"/><path d="M3.2 2.4v4M5.6 2.4v4" stroke="#fff" stroke-width="1.1"/></svg>
<div style="position:absolute;top:889.54px;font-size:6.8px;line-height:6.8px;color:#222222;font-weight:normal;white-space:nowrap;font-family:'Liberation Sans', sans-serif;left:346.70px;-webkit-text-stroke:0.2px #222;">Pause</div>
<svg style="left:382.50px;top:887.30px" width="8.6" height="8.6" viewBox="0 0 8.6 8.6"><path d="M1 1l6.8 6.8M7.8 1L1 7.8" stroke="#e0342a" stroke-width="1.9"/></svg>
<div style="position:absolute;top:889.54px;font-size:6.8px;line-height:6.8px;color:#222222;font-weight:normal;white-space:nowrap;font-family:'Liberation Sans', sans-serif;left:392.80px;-webkit-text-stroke:0.2px #222;">Not Completed</div>
<div style="position:absolute;top:881.87px;font-size:7px;line-height:7px;color:#444444;font-weight:normal;white-space:nowrap;font-family:'Liberation Sans', sans-serif;left:211.00px;width:600px;text-align:center;">0</div>
<div style="position:absolute;top:853.17px;font-size:7px;line-height:7px;color:#444444;font-weight:normal;white-space:nowrap;font-family:'Liberation Sans', sans-serif;left:211.00px;width:600px;text-align:center;">2</div>
<div style="position:absolute;top:824.47px;font-size:7px;line-height:7px;color:#444444;font-weight:normal;white-space:nowrap;font-family:'Liberation Sans', sans-serif;left:211.00px;width:600px;text-align:center;">4</div>
<div style="position:absolute;top:795.77px;font-size:7px;line-height:7px;color:#444444;font-weight:normal;white-space:nowrap;font-family:'Liberation Sans', sans-serif;left:211.00px;width:600px;text-align:center;">6</div>
<div style="position:absolute;top:767.07px;font-size:7px;line-height:7px;color:#444444;font-weight:normal;white-space:nowrap;font-family:'Liberation Sans', sans-serif;left:211.00px;width:600px;text-align:center;">8</div>
<div style="position:absolute;left:543.10px;top:842.65px;width:46.70px;height:43.35px;background:#678fab;border-radius:1px 1px 0 0;"></div>
<div style="position:absolute;left:616.00px;top:813.75px;width:47.30px;height:72.25px;background:#d9f8d9;border-radius:1px 1px 0 0;"></div>
<div style="position:absolute;left:689.00px;top:828.20px;width:46.80px;height:57.80px;background:#7aa5d8;border-radius:1px 1px 0 0;"></div>
<div style="position:absolute;left:762.30px;top:857.10px;width:47.70px;height:28.90px;background:#fdfbe8;border-radius:1px 1px 0 0;"></div>
<div style="position:absolute;left:835.40px;top:770.40px;width:47.40px;height:115.60px;background:#d0a6bb;border-radius:1px 1px 0 0;"></div>
<svg style="left:548.00px;top:887.30px" width="8.6" height="8.6" viewBox="0 0 8.6 8.6"><path d="M0.5 3.8q2-1.8 4-0.8q2-1 3.8 0.8l-1.5 3.2q-2.5 1.3-5 -0.3z" fill="#f2b835"/><path d="M2.5 4.5l2.2 1.6" stroke="#c98a14" stroke-width="0.6"/></svg>
<div style="position:absolute;top:889.54px;font-size:6.8px;line-height:6.8px;color:#222222;font-weight:normal;white-space:nowrap;font-family:'Liberation Sans', sans-serif;left:559.00px;-webkit-text-stroke:0.2px #222;">Referral</div>
<svg style="left:622.00px;top:887.30px" width="8.6" height="8.6" viewBox="0 0 8.6 8.6"><circle cx="4.3" cy="4.3" r="4" fill="#a9cbe6"/><path d="M0.3 4.3h8M4.3 0.3v8M1 2.5h6.6M1 6.1h6.6" stroke="#e8f2fa" stroke-width="0.6"/><ellipse cx="4.3" cy="4.3" rx="1.9" ry="4" fill="none" stroke="#e8f2fa" stroke-width="0.6"/></svg>
<div style="position:absolute;top:889.54px;font-size:6.8px;line-height:6.8px;color:#222222;font-weight:normal;white-space:nowrap;font-family:'Liberation Sans', sans-serif;left:631.70px;-webkit-text-stroke:0.2px #222;">Website</div>
<svg style="left:688.00px;top:887.30px" width="8.6" height="8.6" viewBox="0 0 8.6 8.6"><rect x="1.5" y="0" width="5.2" height="8.8" rx="0.9" fill="#222"/><rect x="2.2" y="1" width="3.8" height="6.5" fill="#3a3a3a"/></svg>
<div style="position:absolute;top:889.54px;font-size:6.8px;line-height:6.8px;color:#222222;font-weight:normal;white-space:nowrap;font-family:'Liberation Sans', sans-serif;left:697.80px;-webkit-text-stroke:0.2px #222;">Social Media</div>
<svg style="left:768.80px;top:887.30px" width="8.6" height="8.6" viewBox="0 0 8.6 8.6"><path d="M1.5 3.2l6-1.2 0.7 3.2-6 1.2z" fill="#a9b98a"/><path d="M0.5 1.5q1.5-1 3 0.5M5.2 1q1.5-1 3 0" fill="none" stroke="#9aa" stroke-width="0.8"/><path d="M1.5 7.5q2 1 3.5 0" fill="none" stroke="#9aa" stroke-width="0.7"/></svg>
<div style="position:absolute;top:889.54px;font-size:6.8px;line-height:6.8px;color:#222222;font-weight:normal;white-space:nowrap;font-family:'Liberation Sans', sans-serif;left:779.30px;-webkit-text-stroke:0.2px #222;">Affiliate</div>
<svg style="left:831.20px;top:887.30px" width="8.6" height="8.6" viewBox="0 0 8.6 8.6"><path d="M1.2 4q0-3.5 3.2-3.5t3 3.2l-0.6 1 0.4 0.8-0.8 0.2v1.3q-0.5 1-2 0.6v1.2H2v-2q-0.8-1.2-0.8-2.8z" fill="#41659a"/></svg>
<div style="position:absolute;top:889.54px;font-size:6.8px;line-height:6.8px;color:#222222;font-weight:normal;white-space:nowrap;font-family:'Liberation Sans', sans-serif;left:841.30px;-webkit-text-stroke:0.2px #222;">Word of Mouth</div>
</body></html>
